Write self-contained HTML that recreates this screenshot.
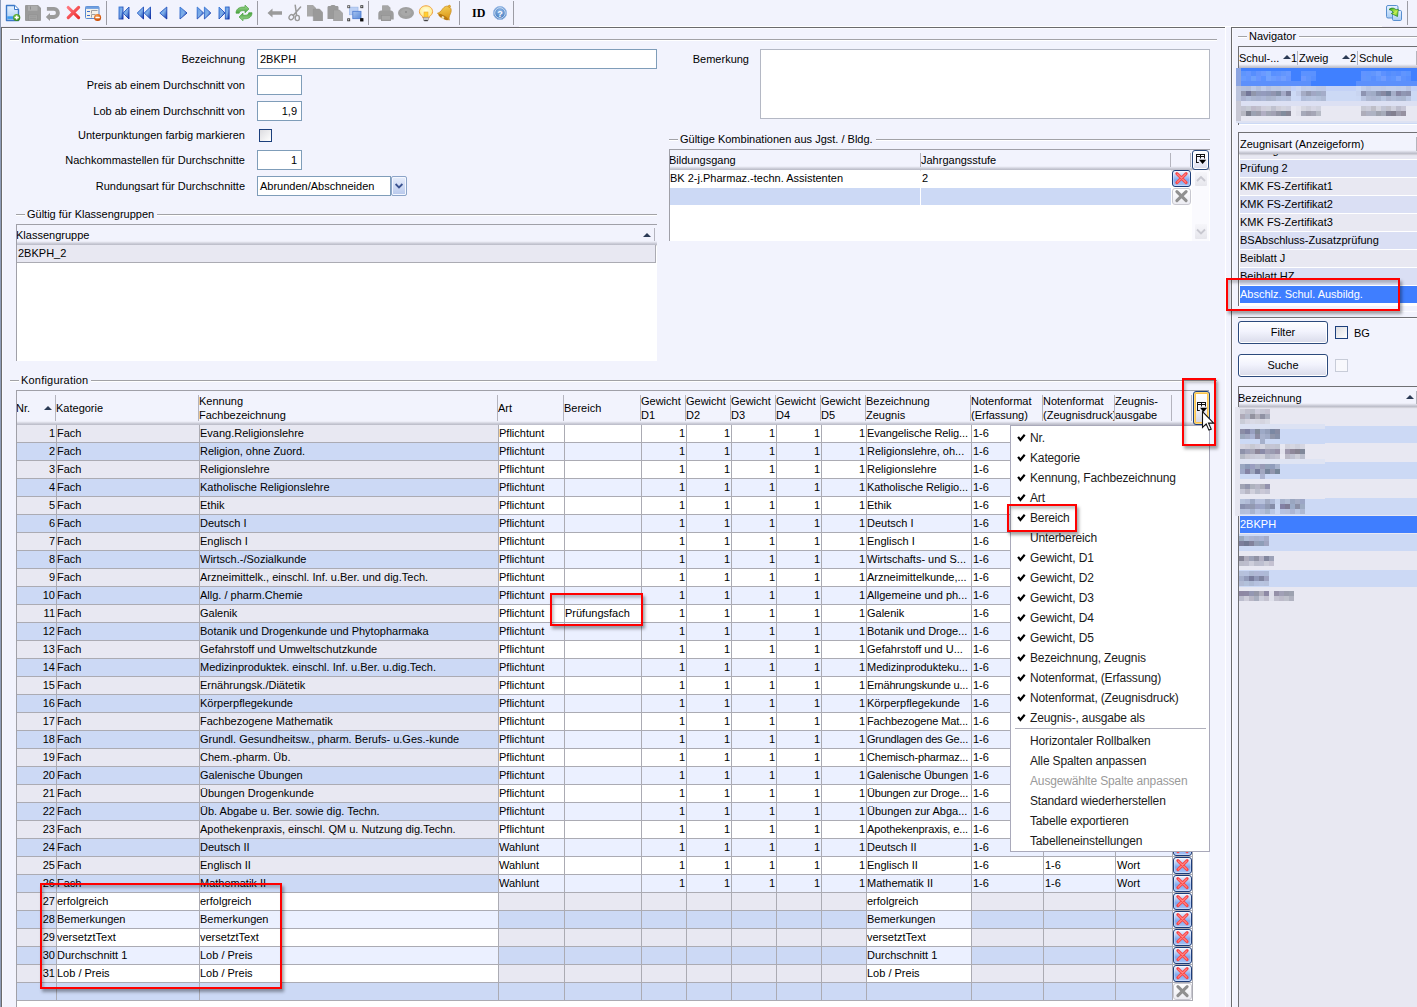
<!DOCTYPE html>
<html lang="de"><head><meta charset="utf-8"><title>Zeugniskonfiguration</title>
<style>
*{box-sizing:border-box;margin:0;padding:0}
html,body{width:1417px;height:1007px;overflow:hidden}
body{background:#F2F3FD;font:11px "Liberation Sans",sans-serif;color:#000;position:relative}
.abs{position:absolute}
.lbl{position:absolute;white-space:nowrap;line-height:14px;height:14px}
.r{text-align:right}
.inp{position:absolute;background:#fff;border:1px solid #7F9DB9;height:20px;line-height:18px;padding:0 2px;white-space:nowrap}
.grp{position:absolute;height:2px;background:linear-gradient(#A2A2A6 50%,#FFFFFF 50%)}
.leg{position:absolute;background:#F2F3FD;padding:0 3px 0 2px;line-height:14px;height:14px;white-space:nowrap}
.tbl{position:absolute;background:#fff;border-top:1px solid #A0A0A8;border-left:1px solid #A0A0A8;overflow:hidden}
.tbl.nt{border-top-color:#707074;border-left-color:#707074}
.hdr{position:absolute;left:0;top:0;right:0;background:linear-gradient(to bottom,#F2F3FD 0,#F2F3FD calc(100% - 4px),#E6E7F1 calc(100% - 3px),#D2D3DE calc(100% - 2px),#B8B9C5 100%);box-shadow:0 1px 1px rgba(0,0,0,.10)}
.hc{position:absolute;top:0;bottom:0;white-space:nowrap;line-height:14px;display:flex;align-items:center;overflow:hidden}
.hc.d{border-right:0}
.hd{position:absolute;top:4px;bottom:4px;width:1px;background:#B4B4BE}
.row{position:absolute;left:0;height:18px;display:flex}
.c{height:18px;line-height:17px;border-right:1px solid #ABABB3;border-bottom:1px solid #ABABB3;white-space:nowrap;overflow:hidden;padding-left:0;flex:none}
.c.n{text-align:right;padding-right:1px;padding-left:0}
.o .ro{background:#E8E8F2}
.e .ro{background:#CCD9F5}
.o .ed{background:#fff}
.e .ed{background:#EBF0FF}
.arr{position:absolute;width:0;height:0;border-left:4.5px solid transparent;border-right:4.5px solid transparent;border-bottom:4.5px solid #2B3A55}
.redbox{position:absolute;border:2px solid #FF0000;box-shadow:2px 3px 3px rgba(0,0,0,.36),inset 2px 3px 3px rgba(0,0,0,.22)}
.btn{position:absolute;border:1px solid #2C4A7C;border-radius:3px;background:linear-gradient(#FFFFFF,#F2F3FD 45%,#D9DBEA);text-align:center;line-height:20px;box-shadow:inset 0 0 0 1px #fff}
.chk{position:absolute;width:13px;height:13px;border:1px solid #1C3F7C;background:linear-gradient(135deg,#DCDCE0,#FFFFFF)}
.delb{position:absolute;width:19px;height:17px;border:1px solid #1C3C78;border-radius:3px;background:linear-gradient(#F4F7FF,#B4CAF4 35%,#7FA8F0 60%,#A8C4F4);box-shadow:inset 0 0 0 1px rgba(255,255,255,.35)}
.delg{position:absolute;width:19px;height:17px;border:1px solid #C8C8D0;border-radius:3px;background:linear-gradient(#FFFFFF,#ECECF2)}
.mi{position:absolute;left:19px;white-space:nowrap;font-size:12px;letter-spacing:-.15px;line-height:20px;height:20px;color:#1a1a1a}
.mc{position:absolute;left:6px;width:9px;height:8px}
.blur{position:absolute;filter:blur(1.6px);opacity:.85}
</style></head>
<body>
<svg width="0" height="0" style="position:absolute"><defs>
<linearGradient id="gb" x1="0" y1="0" x2="1" y2="1"><stop offset="0" stop-color="#5F9BE6"/><stop offset=".5" stop-color="#7FAEE8"/><stop offset="1" stop-color="#0A38B0"/></linearGradient>
<linearGradient id="gbs" x1="0" y1="0" x2="1" y2="1"><stop offset="0" stop-color="#3F7CD8"/><stop offset="1" stop-color="#0828A0"/></linearGradient>
<linearGradient id="gdoc" x1="0" y1="0" x2="0" y2="1"><stop offset="0" stop-color="#E8F2FF"/><stop offset="1" stop-color="#A8CCF4"/></linearGradient>
<radialGradient id="ggr" cx=".4" cy=".35" r=".7"><stop offset="0" stop-color="#7FCB4F"/><stop offset="1" stop-color="#2F7F10"/></radialGradient>
<radialGradient id="gor" cx=".4" cy=".3" r=".7"><stop offset="0" stop-color="#F9A050"/><stop offset="1" stop-color="#C84800"/></radialGradient>
<linearGradient id="ggn" x1="0" y1="0" x2="0" y2="1"><stop offset="0" stop-color="#A4DA98"/><stop offset="1" stop-color="#4AA440"/></linearGradient>
<radialGradient id="ghelp" cx=".5" cy=".35" r=".75"><stop offset="0" stop-color="#8FB8E8"/><stop offset="1" stop-color="#2F68B0"/></radialGradient>
<radialGradient id="gbulb" cx=".5" cy=".4" r=".6"><stop offset="0" stop-color="#FFFFE0"/><stop offset=".7" stop-color="#FFF0A0"/><stop offset="1" stop-color="#F8C870"/></radialGradient>
<linearGradient id="gbell" x1="0" y1="0" x2="1" y2="1"><stop offset="0" stop-color="#F8D860"/><stop offset="1" stop-color="#D89010"/></linearGradient>
<linearGradient id="gsel" x1="0" y1="0" x2="1" y2="1"><stop offset="0" stop-color="#A8C4F0"/><stop offset="1" stop-color="#5888D8"/></linearGradient>
<linearGradient id="gx" x1="0" y1="0" x2="1" y2="1"><stop offset="0" stop-color="#FF7880"/><stop offset="1" stop-color="#EC2C2C"/></linearGradient>
<linearGradient id="ggarr" x1="0" y1="0" x2="1" y2="1"><stop offset="0" stop-color="#20A020"/><stop offset=".6" stop-color="#C8F050"/><stop offset="1" stop-color="#40B020"/></linearGradient>
</defs></svg>
<div class="abs" style="left:1px;top:26px;width:1416px;height:1px;background:#EEEBF8"></div>
<div class="abs" style="left:519px;top:26px;width:863px;height:1px;background:#FFFFFF"></div>
<div class="abs" style="left:1px;top:27px;width:1224px;height:1px;background:#6A6A6C"></div>
<div class="abs" style="left:1231px;top:27px;width:186px;height:1px;background:#6A6A6C"></div>
<svg class="abs" style="left:4px;top:4px" width="18" height="18" viewBox="0 0 18 18"><path d="M2.5 1.5h8l4 4v11h-12z" fill="url(#gdoc)" stroke="#3C78C8" stroke-width="1.4" stroke-linejoin="round"/><path d="M10.5 1.5v4h4" fill="#fff" stroke="#3C78C8" stroke-width="1"/><rect x="3.3" y="12.3" width="7" height="2.6" fill="#3C9CF0"/><circle cx="12.7" cy="13.5" r="3.6" fill="url(#ggr)"/><path d="M12.7 11.4v4.2M10.6 13.5h4.2" stroke="#fff" stroke-width="1.5"/></svg>
<svg class="abs" style="left:25px;top:5px" width="16" height="16" viewBox="0 0 16 16"><path d="M0 1a1 1 0 0 1 1-1h12l3 3v12a1 1 0 0 1-1 1h-14a1 1 0 0 1-1-1z" fill="#9A9A9A"/><rect x="3" y="0.8" width="9.5" height="5" fill="#ADADAD"/><rect x="5" y="1.5" width="1" height="3" fill="#8C8C8C"/><rect x="3.5" y="10" width="9" height="5" fill="#A8A8A8" stroke="#8E8E8E" stroke-width=".6"/><path d="M4.5 11.8h7M4.5 13.4h7" stroke="#909090" stroke-width=".7"/></svg>
<svg class="abs" style="left:45px;top:6px" width="16" height="16" viewBox="0 0 16 16"><path d="M1.900 2.850H9a4.080 4.080 0 0 1 0 8.150H4.500" fill="none" stroke="#9B9B9B" stroke-width="3.900"/><path d="M0.800 11l4.200-4v8z" fill="#9B9B9B"/></svg>
<svg class="abs" style="left:66px;top:5px" width="15" height="15" viewBox="0 0 15 15"><path d="M2.2 2.5l10.4 10.2M12.6 2.3L2.2 12.7" stroke="url(#gx)" stroke-width="3.1" stroke-linecap="round"/></svg>
<svg class="abs" style="left:84px;top:5px" width="18" height="17" viewBox="0 0 18 17"><rect x="1.5" y="1.5" width="13.5" height="12" rx="1" fill="#F4F2EA" stroke="#5A8AD0" stroke-width="1"/><rect x="1.5" y="1.5" width="13.5" height="2.4" fill="#6F9FE0"/><path d="M3 6.5h3M3 10.5h3" stroke="#3C6CD0" stroke-width="1.2"/><path d="M7.5 8.5v-3h6M7.5 12.5v-3h4" stroke="#A0A0A0" stroke-width="1" fill="none"/><circle cx="13.6" cy="12.4" r="3.5" fill="url(#gor)"/><rect x="11.4" y="11.7" width="4.4" height="1.5" rx=".5" fill="#fff"/></svg>
<div class="abs" style="left:106px;top:1px;width:1px;height:24px;background:#9C9CA4"></div>
<svg class="abs" style="left:118px;top:6px" width="14" height="14" viewBox="0 0 14 14"><rect x="1" y="1" width="4" height="12" fill="url(#gb)" stroke="url(#gbs)" stroke-width=".9"/><path d="M5 7l6-6v12z" fill="url(#gb)" stroke="url(#gbs)" stroke-width=".9" stroke-linejoin="round"/></svg>
<svg class="abs" style="left:136px;top:6px" width="16" height="14" viewBox="0 0 16 14"><path d="M1.2 7l6.3-6v12z" fill="url(#gb)" stroke="url(#gbs)" stroke-width=".9" stroke-linejoin="round"/><path d="M8.2 7l6.3-6v12z" fill="url(#gb)" stroke="url(#gbs)" stroke-width=".9" stroke-linejoin="round"/></svg>
<svg class="abs" style="left:158px;top:6px" width="10" height="14" viewBox="0 0 10 14"><path d="M1.8 7l7-6v12z" fill="url(#gb)" stroke="url(#gbs)" stroke-width=".9" stroke-linejoin="round"/></svg>
<svg class="abs" style="left:179px;top:6px" width="10" height="14" viewBox="0 0 10 14"><path d="M8 7l-7-6v12z" fill="url(#gb)" stroke="url(#gbs)" stroke-width=".9" stroke-linejoin="round"/></svg>
<svg class="abs" style="left:196px;top:6px" width="16" height="14" viewBox="0 0 16 14"><path d="M7.6 7l-6.4-6v12z" fill="url(#gb)" stroke="url(#gbs)" stroke-width=".9" stroke-linejoin="round"/><path d="M14.8 7l-6.4-6v12z" fill="url(#gb)" stroke="url(#gbs)" stroke-width=".9" stroke-linejoin="round"/></svg>
<svg class="abs" style="left:218px;top:6px" width="13" height="14" viewBox="0 0 13 14"><path d="M7 7l-6-6v12z" fill="url(#gb)" stroke="url(#gbs)" stroke-width=".9" stroke-linejoin="round"/><rect x="7.3" y="1" width="3.8" height="12" fill="url(#gb)" stroke="url(#gbs)" stroke-width=".9"/></svg>
<svg class="abs" style="left:235px;top:4px" width="18" height="18" viewBox="0 0 18 18"><path d="M1 9.200C1 5.200 4 3.100 8 3.100H10V1.100L14 4.900 10 8.800V6.600H8C6 6.600 4.500 7.600 4.200 9.200z" fill="url(#ggn)" stroke="#4CA040" stroke-width=".7" stroke-linejoin="round"/><path transform="rotate(180 9 8.950)" d="M1 9.200C1 5.200 4 3.100 8 3.100H10V1.100L14 4.900 10 8.800V6.600H8C6 6.600 4.500 7.600 4.200 9.200z" fill="url(#ggn)" stroke="#4CA040" stroke-width=".7" stroke-linejoin="round"/></svg>
<div class="abs" style="left:257px;top:1px;width:1px;height:24px;background:#9C9CA4"></div>
<svg class="abs" style="left:267px;top:8px" width="16" height="10" viewBox="0 0 16 10"><path d="M0.500 5l5-4.500v2.700h9.500v3.600H5.500v2.700z" fill="#9A9A9A"/></svg>
<svg class="abs" style="left:288px;top:4px" width="14" height="18" viewBox="0 0 14 18"><path d="M7.200 1.200l1.300 9.500M12.600 3L5.200 11.500" stroke="#9A9A9A" stroke-width="1.500" fill="none" stroke-linecap="round"/><ellipse cx="3.400" cy="13.200" rx="2.200" ry="2.600" fill="none" stroke="#9A9A9A" stroke-width="1.400" transform="rotate(35 3.400 13.200)"/><ellipse cx="9.300" cy="14" rx="2.100" ry="2.600" fill="none" stroke="#9A9A9A" stroke-width="1.400"/></svg>
<svg class="abs" style="left:307px;top:5px" width="16" height="16" viewBox="0 0 16 16"><path d="M0 0h6l3 3v8.500H0z" fill="#A8A8A8"/><path d="M6.300 4h6.200l3.300 3.500V16H6.300z" fill="#9A9A9A" stroke="#909090" stroke-width=".5"/></svg>
<svg class="abs" style="left:327px;top:5px" width="16" height="16" viewBox="0 0 16 16"><path d="M0.500 2.500c0-1 .6-1.500 1.500-1.500h1.500c.4-.8 1-1 2-1h1c1 0 1.600.2 2 1H10c1 0 1.500.5 1.500 1.500V14H0.500z" fill="#9A9A9A"/><path d="M6.500 5h6l3.300 3.300V16H6.500z" fill="#A6A6A6" stroke="#909090" stroke-width=".5"/></svg>
<svg class="abs" style="left:347px;top:5px" width="17" height="17" viewBox="0 0 17 17"><rect x="2.500" y="2.200" width="8.500" height="7.500" fill="#BCD0F4" stroke="#A0BCEC" stroke-width=".8"/><rect x="5.800" y="6.300" width="8.200" height="7.400" fill="url(#gsel)" stroke="#4878D0" stroke-width=".8"/><rect x=".7" y=".7" width="2" height="2" fill="#fff" stroke="#555" stroke-width=".9"/><rect x="13.800" y=".7" width="2" height="2" fill="#fff" stroke="#333" stroke-width=".9"/><rect x=".7" y="13.800" width="2" height="2" fill="#fff" stroke="#333" stroke-width=".9"/><rect x="13.600" y="13.600" width="2.400" height="2.400" fill="#111" stroke="#111" stroke-width=".9"/></svg>
<div class="abs" style="left:368px;top:1px;width:1px;height:24px;background:#9C9CA4"></div>
<svg class="abs" style="left:378px;top:5px" width="16" height="16" viewBox="0 0 16 16"><path d="M4 6V1.200c0-.6.400-1 1-1h5l2.500 2.500V6z" fill="#A6A6A6"/><path d="M0.300 9c0-2 1.200-3.500 3-3.500h9.400c1.800 0 3 1.500 3 3.500v5.500h-2.700V16H3v-1.500H0.300z" fill="#9C9C9C"/><rect x="3.600" y="10.500" width="8.800" height="4.600" fill="#A8A8A8" stroke="#8E8E8E" stroke-width=".5"/></svg>
<svg class="abs" style="left:398px;top:7px" width="16" height="12" viewBox="0 0 16 12"><ellipse cx="8" cy="6" rx="8" ry="6" fill="#A0A0A0"/><ellipse cx="8" cy="5.500" rx="5.500" ry="3.500" fill="#A8A8A8"/><circle cx="8" cy="5" r="1" fill="#888"/></svg>
<svg class="abs" style="left:418px;top:5px" width="16" height="17" viewBox="0 0 16 17"><path d="M8 .8c3.800 0 6.600 2.600 6.600 5.800 0 2.400-1.600 3.800-3.400 5.200v1.200H4.800v-1.200C3 10.400 1.400 9 1.400 6.600 1.400 3.400 4.200.8 8 .8z" fill="url(#gbulb)" stroke="#F0A040" stroke-width="1"/><rect x="6" y="7" width="4" height="5" fill="#FFD030" stroke="#F0A830" stroke-width=".6"/><rect x="5.600" y="12.600" width="4.800" height="2.600" fill="#C8C8C8" stroke="#888" stroke-width=".5"/><rect x="6.200" y="15" width="3.600" height="1.200" fill="#444"/></svg>
<svg class="abs" style="left:437px;top:4px" width="17" height="18" viewBox="0 0 17 18"><g transform="rotate(30 8.500 9)"><path d="M8.500 1.800c2.800 0 4.300 2.200 4.600 5.500.2 2.800.8 4.400 2.200 6H1.700c1.400-1.600 2-3.200 2.200-6 .3-3.300 1.800-5.500 4.600-5.500z" fill="url(#gbell)" stroke="#C88818" stroke-width=".7"/><circle cx="8.500" cy="1.300" r="1.200" fill="#E8B030" stroke="#C88818" stroke-width=".5"/><ellipse cx="8.500" cy="13.600" rx="5.500" ry="1.700" fill="#B87810"/><circle cx="8.500" cy="14.300" r="1.400" fill="#F0E0B0"/></g></svg>
<div class="abs" style="left:459px;top:1px;width:1px;height:24px;background:#9C9CA4"></div>
<div class="abs" style="left:472px;top:6px;font:bold 12px 'Liberation Serif',serif;line-height:14px;color:#000">ID</div>
<svg class="abs" style="left:492px;top:5px" width="16" height="16" viewBox="0 0 16 16"><circle cx="8" cy="8" r="6.600" fill="url(#ghelp)" stroke="#9CBCE8" stroke-width="1"/><circle cx="8" cy="8" r="5.300" fill="none" stroke="#E8F0FC" stroke-width=".8"/><text x="8" y="11.500" font-family="Liberation Sans,sans-serif" font-weight="bold" font-size="9" fill="#fff" text-anchor="middle">?</text></svg>
<div class="abs" style="left:513px;top:1px;width:1px;height:24px;background:#9C9CA4"></div>
<svg class="abs" style="left:1385px;top:4px" width="18" height="18" viewBox="0 0 18 18"><rect x="1.500" y="1.500" width="11.500" height="12.500" rx="1.500" fill="url(#gdoc)" stroke="#5A90D0" stroke-width="1"/><rect x="7.500" y="6.500" width="9" height="10" rx="1.200" fill="url(#gdoc)" stroke="#5A90D0" stroke-width="1"/><path d="M4 5.500c2-1.800 5-2 7 .3l2.300-.6-.8 7.300-6.300-3 2.200-.8C7.500 6.800 6 6.200 4 5.500z" fill="url(#ggarr)" stroke="#208020" stroke-width=".7" stroke-linejoin="round"/></svg>
<div class="abs" style="left:1407px;top:1px;width:1px;height:24px;background:#9C9CA4"></div>
<div class="abs" style="left:0;top:0;width:1px;height:1007px;background:#8E9CB8"></div>
<div class="abs" style="left:1px;top:27px;width:1px;height:980px;background:#6A6A6C"></div>
<div class="abs" style="left:2px;top:28px;width:1px;height:979px;background:#FAFAFF"></div>
<div class="abs" style="left:2px;top:28px;width:1223px;height:1px;background:#FAFAFF"></div>
<div class="abs" style="left:1225px;top:27px;width:1px;height:980px;background:#fff"></div>
<div class="grp" style="left:10px;top:39px;width:1207px"></div><div class="leg" style="left:19px;top:32px"><span style="letter-spacing:.27px">Information</span></div>
<div class="lbl r" style="left:-55px;width:300px;top:52px">Bezeichnung</div>
<div class="inp" style="left:257px;top:49px;width:400px">2BKPH</div>
<div class="lbl r" style="left:-55px;width:300px;top:78px">Preis ab einem Durchschnitt von</div>
<div class="inp" style="left:257px;top:75px;width:45px"></div>
<div class="lbl r" style="left:-55px;width:300px;top:104px">Lob ab einem Durchschnitt von</div>
<div class="inp r" style="left:257px;top:101px;width:45px;padding-right:4px">1,9</div>
<div class="lbl r" style="left:-55px;width:300px;top:128px">Unterpunktungen farbig markieren</div>
<div class="chk" style="left:259px;top:129px"></div>
<div class="lbl r" style="left:-55px;width:300px;top:153px">Nachkommastellen für Durchschnitte</div>
<div class="inp r" style="left:257px;top:150px;width:45px;padding-right:4px">1</div>
<div class="lbl r" style="left:-55px;width:300px;top:179px">Rundungsart für Durchschnitte</div>
<div class="inp" style="left:257px;top:176px;width:134px">Abrunden/Abschneiden</div>
<div class="abs" style="left:391px;top:176px;width:16px;height:20px;border:1px solid #8CA4C8;border-radius:2px;background:linear-gradient(#E8EEFC,#B8C8EC);box-shadow:inset 0 0 0 1px #F4F7FF"><svg width="10" height="8" viewBox="0 0 10 8" style="position:absolute;left:2px;top:5px"><path d="M1.600 2l3.400 3.400 3.400-3.400" fill="none" stroke="#3A5290" stroke-width="1.800"/></svg></div>
<div class="lbl r" style="left:449px;width:300px;top:52px">Bemerkung</div>
<div class="abs" style="left:760px;top:49px;width:450px;height:70px;background:#fff;border:1px solid #B4B8C4"></div>
<div class="grp" style="left:16px;top:214px;width:641px"></div><div class="leg" style="left:25px;top:207px">Gültig für Klassengruppen</div>
<div class="tbl" style="left:16px;top:224px;width:641px;height:137px"><div class="hdr" style="height:20px"><div class="hc" style="left:-1px;width:300px">Klassengruppe</div><div class="arr" style="left:626px;top:8px"></div><div class="hd" style="left:637px;top:3px;bottom:4px"></div></div><div class="abs" style="left:0;top:20px;width:639px;height:18px;background:#E8E8F2;border-bottom:1px solid #ABABB3;border-right:1px solid #ABABB3;line-height:17px;padding-left:1px">2BKPH_2</div></div>
<div class="grp" style="left:669px;top:139px;width:541px"></div><div class="leg" style="left:678px;top:132px">Gültige Kombinationen aus Jgst. / Bldg.</div>
<div class="tbl" style="left:669px;top:149px;width:541px;height:92px"><div class="hdr" style="height:20px"><div class="hc" style="left:-1px;width:240px">Bildungsgang</div><div class="hd" style="left:250px;top:3px;bottom:3px"></div><div class="hc" style="left:251px;width:200px">Jahrgangsstufe</div><div class="hd" style="left:500px;top:3px;bottom:3px"></div><div class="hd" style="left:520px;top:3px;bottom:3px"></div></div><div class="abs" style="left:0;top:20px;width:250px;height:18px;line-height:17px;padding-left:0;background:#fff">BK 2-j.Pharmaz.-techn. Assistenten</div><div class="abs" style="left:251px;top:20px;width:250px;height:18px;line-height:17px;padding-left:1px;background:#fff">2</div><div class="abs" style="left:0;top:38px;width:250px;height:17px;background:#CCD9F5"></div><div class="abs" style="left:251px;top:38px;width:250px;height:17px;background:#CCD9F5"></div><div class="delb" style="left:502px;top:20px;height:17px"><svg width="17" height="15" viewBox="0 0 17 15" style="position:absolute;left:0;top:0"><path d="M3.900 2.700l9.200 9M13.100 2.700L3.900 11.700" stroke="#FA4848" stroke-width="3.100" stroke-linecap="round"/><path d="M4.400 3.200l8.200 8M12.600 3.200L4.400 11.200" stroke="#FF8888" stroke-width="1.100" stroke-linecap="round"/></svg></div><div class="delg" style="left:502px;top:38px;height:17px"><svg width="17" height="15" viewBox="0 0 17 15" style="position:absolute;left:0;top:0"><path d="M3.900 2.700l9.200 9M13.100 2.700L3.900 11.700" stroke="#909090" stroke-width="3.100" stroke-linecap="round"/></svg></div><div class="abs" style="left:522px;top:20px;width:17px;height:71px;background:#FAFAFE"></div><div class="abs" style="left:525px;top:22px;width:12px;height:14px;background:linear-gradient(#F6F6FA,#E6E6EC);border-radius:1px"><svg width="12" height="14" style="position:absolute"><path d="M2 9l4-4 4 4" fill="none" stroke="#C8C8D0" stroke-width="1.800"/></svg></div><div class="abs" style="left:525px;top:74px;width:12px;height:15px;background:linear-gradient(#F6F6FA,#E6E6EC);border-radius:1px"><svg width="12" height="15" style="position:absolute"><path d="M2 5.500l4 4 4-4" fill="none" stroke="#C8C8D0" stroke-width="1.800"/></svg></div></div>
<div class="abs" style="left:1192px;top:150px;width:17px;height:20px;border:1px solid #2C4A7C;border-radius:3px;background:linear-gradient(#FFFFFF,#F2F3FD 50%,#D9DBEA);box-shadow:inset 0 0 0 1px #fff"><svg width="11" height="11" viewBox="0 0 11 11" style="position:absolute;left:3px;top:3px"><path d="M0 .5h9M0 2.500h9M.5 0v8.500M4.500 0v4.500M8.500 0v4.500M0 8.500h2.800" fill="none" stroke="#111" stroke-width="1"/><path d="M3 5.800h7.200l-3.600 4.300z" fill="#000"/></svg></div>
<div class="grp" style="left:10px;top:380px;width:1207px"></div><div class="leg" style="left:19px;top:373px"><span style="letter-spacing:.2px">Konfiguration</span></div>
<div class="tbl" style="left:16px;top:390px;width:1193px;height:617px">
<div class="hdr" style="height:34px">
<div class="hc" style="left:-1px;width:39px;"><span>Nr.</span></div>
<div class="hd" style="left:38px"></div>
<div class="hc" style="left:39px;width:142px;"><span>Kategorie</span></div>
<div class="hd" style="left:181px"></div>
<div class="hc" style="left:182px;width:298px;"><span>Kennung<br>Fachbezeichnung</span></div>
<div class="hd" style="left:480px"></div>
<div class="hc" style="left:481px;width:65px;"><span>Art</span></div>
<div class="hd" style="left:546px"></div>
<div class="hc" style="left:547px;width:76px;"><span>Bereich</span></div>
<div class="hd" style="left:623px"></div>
<div class="hc" style="left:624px;width:44px;"><span>Gewicht<br>D1</span></div>
<div class="hd" style="left:668px"></div>
<div class="hc" style="left:669px;width:44px;"><span>Gewicht<br>D2</span></div>
<div class="hd" style="left:713px"></div>
<div class="hc" style="left:714px;width:44px;"><span>Gewicht<br>D3</span></div>
<div class="hd" style="left:758px"></div>
<div class="hc" style="left:759px;width:44px;"><span>Gewicht<br>D4</span></div>
<div class="hd" style="left:803px"></div>
<div class="hc" style="left:804px;width:44px;"><span>Gewicht<br>D5</span></div>
<div class="hd" style="left:848px"></div>
<div class="hc" style="left:849px;width:104px;"><span>Bezeichnung<br>Zeugnis</span></div>
<div class="hd" style="left:953px"></div>
<div class="hc" style="left:954px;width:71px;"><span>Notenformat<br>(Erfassung)</span></div>
<div class="hd" style="left:1025px"></div>
<div class="hc" style="left:1026px;width:71px;"><span>Notenformat<br>(Zeugnisdruck)</span></div>
<div class="hd" style="left:1097px"></div>
<div class="hc" style="left:1098px;width:56px;"><span>Zeugnis-<br>ausgabe</span></div>
<div class="hd" style="left:1154px"></div>
<div class="hd" style="left:1174px"></div>
<div class="arr" style="left:27px;top:15px"></div>
</div>
<div class="row o" style="top:34px"><div class="c ro n" style="width:40px">1</div><div class="c ro" style="width:143px">Fach</div><div class="c ro" style="width:299px">Evang.Religionslehre</div><div class="c ed" style="width:66px">Pflichtunt</div><div class="c ed" style="width:77px"></div><div class="c ed n" style="width:45px">1</div><div class="c ed n" style="width:45px">1</div><div class="c ed n" style="width:45px">1</div><div class="c ed n" style="width:45px">1</div><div class="c ed n" style="width:45px">1</div><div class="c ed" style="width:105px"><span style="letter-spacing:-0.08px">Evangelische Relig...</span></div><div class="c ed" style="width:72px;padding-left:1px">1-6</div><div class="c ed" style="width:72px;padding-left:1px">1-6</div><div class="c ed" style="width:57px;padding-left:1px">Wort</div><div class="c" style="width:20px;background:#fff"></div></div>
<div class="delb" style="left:1156px;top:34px"><svg width="17" height="15" viewBox="0 0 17 15" style="position:absolute;left:0;top:0"><path d="M3.900 2.700l9.200 9M13.100 2.700L3.900 11.700" stroke="#FA4848" stroke-width="3.100" stroke-linecap="round"/><path d="M4.400 3.200l8.200 8M12.600 3.200L4.400 11.200" stroke="#FF8888" stroke-width="1.100" stroke-linecap="round"/></svg></div>
<div class="row e" style="top:52px"><div class="c ro n" style="width:40px">2</div><div class="c ro" style="width:143px">Fach</div><div class="c ro" style="width:299px">Religion, ohne Zuord.</div><div class="c ed" style="width:66px">Pflichtunt</div><div class="c ed" style="width:77px"></div><div class="c ed n" style="width:45px">1</div><div class="c ed n" style="width:45px">1</div><div class="c ed n" style="width:45px">1</div><div class="c ed n" style="width:45px">1</div><div class="c ed n" style="width:45px">1</div><div class="c ed" style="width:105px">Religionslehre, oh...</div><div class="c ed" style="width:72px;padding-left:1px">1-6</div><div class="c ed" style="width:72px;padding-left:1px">1-6</div><div class="c ed" style="width:57px;padding-left:1px">Wort</div><div class="c" style="width:20px;background:#fff"></div></div>
<div class="delb" style="left:1156px;top:52px"><svg width="17" height="15" viewBox="0 0 17 15" style="position:absolute;left:0;top:0"><path d="M3.900 2.700l9.200 9M13.100 2.700L3.900 11.700" stroke="#FA4848" stroke-width="3.100" stroke-linecap="round"/><path d="M4.400 3.200l8.200 8M12.600 3.200L4.400 11.200" stroke="#FF8888" stroke-width="1.100" stroke-linecap="round"/></svg></div>
<div class="row o" style="top:70px"><div class="c ro n" style="width:40px">3</div><div class="c ro" style="width:143px">Fach</div><div class="c ro" style="width:299px">Religionslehre</div><div class="c ed" style="width:66px">Pflichtunt</div><div class="c ed" style="width:77px"></div><div class="c ed n" style="width:45px">1</div><div class="c ed n" style="width:45px">1</div><div class="c ed n" style="width:45px">1</div><div class="c ed n" style="width:45px">1</div><div class="c ed n" style="width:45px">1</div><div class="c ed" style="width:105px">Religionslehre</div><div class="c ed" style="width:72px;padding-left:1px">1-6</div><div class="c ed" style="width:72px;padding-left:1px">1-6</div><div class="c ed" style="width:57px;padding-left:1px">Wort</div><div class="c" style="width:20px;background:#fff"></div></div>
<div class="delb" style="left:1156px;top:70px"><svg width="17" height="15" viewBox="0 0 17 15" style="position:absolute;left:0;top:0"><path d="M3.900 2.700l9.200 9M13.100 2.700L3.900 11.700" stroke="#FA4848" stroke-width="3.100" stroke-linecap="round"/><path d="M4.400 3.200l8.200 8M12.600 3.200L4.400 11.200" stroke="#FF8888" stroke-width="1.100" stroke-linecap="round"/></svg></div>
<div class="row e" style="top:88px"><div class="c ro n" style="width:40px">4</div><div class="c ro" style="width:143px">Fach</div><div class="c ro" style="width:299px">Katholische Religionslehre</div><div class="c ed" style="width:66px">Pflichtunt</div><div class="c ed" style="width:77px"></div><div class="c ed n" style="width:45px">1</div><div class="c ed n" style="width:45px">1</div><div class="c ed n" style="width:45px">1</div><div class="c ed n" style="width:45px">1</div><div class="c ed n" style="width:45px">1</div><div class="c ed" style="width:105px"><span style="letter-spacing:-0.08px">Katholische Religio...</span></div><div class="c ed" style="width:72px;padding-left:1px">1-6</div><div class="c ed" style="width:72px;padding-left:1px">1-6</div><div class="c ed" style="width:57px;padding-left:1px">Wort</div><div class="c" style="width:20px;background:#fff"></div></div>
<div class="delb" style="left:1156px;top:88px"><svg width="17" height="15" viewBox="0 0 17 15" style="position:absolute;left:0;top:0"><path d="M3.900 2.700l9.200 9M13.100 2.700L3.900 11.700" stroke="#FA4848" stroke-width="3.100" stroke-linecap="round"/><path d="M4.400 3.200l8.200 8M12.600 3.200L4.400 11.200" stroke="#FF8888" stroke-width="1.100" stroke-linecap="round"/></svg></div>
<div class="row o" style="top:106px"><div class="c ro n" style="width:40px">5</div><div class="c ro" style="width:143px">Fach</div><div class="c ro" style="width:299px">Ethik</div><div class="c ed" style="width:66px">Pflichtunt</div><div class="c ed" style="width:77px"></div><div class="c ed n" style="width:45px">1</div><div class="c ed n" style="width:45px">1</div><div class="c ed n" style="width:45px">1</div><div class="c ed n" style="width:45px">1</div><div class="c ed n" style="width:45px">1</div><div class="c ed" style="width:105px">Ethik</div><div class="c ed" style="width:72px;padding-left:1px">1-6</div><div class="c ed" style="width:72px;padding-left:1px">1-6</div><div class="c ed" style="width:57px;padding-left:1px">Wort</div><div class="c" style="width:20px;background:#fff"></div></div>
<div class="delb" style="left:1156px;top:106px"><svg width="17" height="15" viewBox="0 0 17 15" style="position:absolute;left:0;top:0"><path d="M3.900 2.700l9.200 9M13.100 2.700L3.900 11.700" stroke="#FA4848" stroke-width="3.100" stroke-linecap="round"/><path d="M4.400 3.200l8.200 8M12.600 3.200L4.400 11.200" stroke="#FF8888" stroke-width="1.100" stroke-linecap="round"/></svg></div>
<div class="row e" style="top:124px"><div class="c ro n" style="width:40px">6</div><div class="c ro" style="width:143px">Fach</div><div class="c ro" style="width:299px">Deutsch I</div><div class="c ed" style="width:66px">Pflichtunt</div><div class="c ed" style="width:77px"></div><div class="c ed n" style="width:45px">1</div><div class="c ed n" style="width:45px">1</div><div class="c ed n" style="width:45px">1</div><div class="c ed n" style="width:45px">1</div><div class="c ed n" style="width:45px">1</div><div class="c ed" style="width:105px">Deutsch I</div><div class="c ed" style="width:72px;padding-left:1px">1-6</div><div class="c ed" style="width:72px;padding-left:1px">1-6</div><div class="c ed" style="width:57px;padding-left:1px">Wort</div><div class="c" style="width:20px;background:#fff"></div></div>
<div class="delb" style="left:1156px;top:124px"><svg width="17" height="15" viewBox="0 0 17 15" style="position:absolute;left:0;top:0"><path d="M3.900 2.700l9.200 9M13.100 2.700L3.900 11.700" stroke="#FA4848" stroke-width="3.100" stroke-linecap="round"/><path d="M4.400 3.200l8.200 8M12.600 3.200L4.400 11.200" stroke="#FF8888" stroke-width="1.100" stroke-linecap="round"/></svg></div>
<div class="row o" style="top:142px"><div class="c ro n" style="width:40px">7</div><div class="c ro" style="width:143px">Fach</div><div class="c ro" style="width:299px">Englisch I</div><div class="c ed" style="width:66px">Pflichtunt</div><div class="c ed" style="width:77px"></div><div class="c ed n" style="width:45px">1</div><div class="c ed n" style="width:45px">1</div><div class="c ed n" style="width:45px">1</div><div class="c ed n" style="width:45px">1</div><div class="c ed n" style="width:45px">1</div><div class="c ed" style="width:105px">Englisch I</div><div class="c ed" style="width:72px;padding-left:1px">1-6</div><div class="c ed" style="width:72px;padding-left:1px">1-6</div><div class="c ed" style="width:57px;padding-left:1px">Wort</div><div class="c" style="width:20px;background:#fff"></div></div>
<div class="delb" style="left:1156px;top:142px"><svg width="17" height="15" viewBox="0 0 17 15" style="position:absolute;left:0;top:0"><path d="M3.900 2.700l9.200 9M13.100 2.700L3.900 11.700" stroke="#FA4848" stroke-width="3.100" stroke-linecap="round"/><path d="M4.400 3.200l8.200 8M12.600 3.200L4.400 11.200" stroke="#FF8888" stroke-width="1.100" stroke-linecap="round"/></svg></div>
<div class="row e" style="top:160px"><div class="c ro n" style="width:40px">8</div><div class="c ro" style="width:143px">Fach</div><div class="c ro" style="width:299px">Wirtsch.-/Sozialkunde</div><div class="c ed" style="width:66px">Pflichtunt</div><div class="c ed" style="width:77px"></div><div class="c ed n" style="width:45px">1</div><div class="c ed n" style="width:45px">1</div><div class="c ed n" style="width:45px">1</div><div class="c ed n" style="width:45px">1</div><div class="c ed n" style="width:45px">1</div><div class="c ed" style="width:105px">Wirtschafts- und S...</div><div class="c ed" style="width:72px;padding-left:1px">1-6</div><div class="c ed" style="width:72px;padding-left:1px">1-6</div><div class="c ed" style="width:57px;padding-left:1px">Wort</div><div class="c" style="width:20px;background:#fff"></div></div>
<div class="delb" style="left:1156px;top:160px"><svg width="17" height="15" viewBox="0 0 17 15" style="position:absolute;left:0;top:0"><path d="M3.900 2.700l9.200 9M13.100 2.700L3.900 11.700" stroke="#FA4848" stroke-width="3.100" stroke-linecap="round"/><path d="M4.400 3.200l8.200 8M12.600 3.200L4.400 11.200" stroke="#FF8888" stroke-width="1.100" stroke-linecap="round"/></svg></div>
<div class="row o" style="top:178px"><div class="c ro n" style="width:40px">9</div><div class="c ro" style="width:143px">Fach</div><div class="c ro" style="width:299px">Arzneimittelk., einschl. Inf. u.Ber. und dig.Tech.</div><div class="c ed" style="width:66px">Pflichtunt</div><div class="c ed" style="width:77px"></div><div class="c ed n" style="width:45px">1</div><div class="c ed n" style="width:45px">1</div><div class="c ed n" style="width:45px">1</div><div class="c ed n" style="width:45px">1</div><div class="c ed n" style="width:45px">1</div><div class="c ed" style="width:105px">Arzneimittelkunde,...</div><div class="c ed" style="width:72px;padding-left:1px">1-6</div><div class="c ed" style="width:72px;padding-left:1px">1-6</div><div class="c ed" style="width:57px;padding-left:1px">Wort</div><div class="c" style="width:20px;background:#fff"></div></div>
<div class="delb" style="left:1156px;top:178px"><svg width="17" height="15" viewBox="0 0 17 15" style="position:absolute;left:0;top:0"><path d="M3.900 2.700l9.200 9M13.100 2.700L3.900 11.700" stroke="#FA4848" stroke-width="3.100" stroke-linecap="round"/><path d="M4.400 3.200l8.200 8M12.600 3.200L4.400 11.200" stroke="#FF8888" stroke-width="1.100" stroke-linecap="round"/></svg></div>
<div class="row e" style="top:196px"><div class="c ro n" style="width:40px">10</div><div class="c ro" style="width:143px">Fach</div><div class="c ro" style="width:299px">Allg. / pharm.Chemie</div><div class="c ed" style="width:66px">Pflichtunt</div><div class="c ed" style="width:77px"></div><div class="c ed n" style="width:45px">1</div><div class="c ed n" style="width:45px">1</div><div class="c ed n" style="width:45px">1</div><div class="c ed n" style="width:45px">1</div><div class="c ed n" style="width:45px">1</div><div class="c ed" style="width:105px">Allgemeine und ph...</div><div class="c ed" style="width:72px;padding-left:1px">1-6</div><div class="c ed" style="width:72px;padding-left:1px">1-6</div><div class="c ed" style="width:57px;padding-left:1px">Wort</div><div class="c" style="width:20px;background:#fff"></div></div>
<div class="delb" style="left:1156px;top:196px"><svg width="17" height="15" viewBox="0 0 17 15" style="position:absolute;left:0;top:0"><path d="M3.900 2.700l9.200 9M13.100 2.700L3.900 11.700" stroke="#FA4848" stroke-width="3.100" stroke-linecap="round"/><path d="M4.400 3.200l8.200 8M12.600 3.200L4.400 11.200" stroke="#FF8888" stroke-width="1.100" stroke-linecap="round"/></svg></div>
<div class="row o" style="top:214px"><div class="c ro n" style="width:40px">11</div><div class="c ro" style="width:143px">Fach</div><div class="c ro" style="width:299px">Galenik</div><div class="c ed" style="width:66px">Pflichtunt</div><div class="c ed" style="width:77px">Prüfungsfach</div><div class="c ed n" style="width:45px">1</div><div class="c ed n" style="width:45px">1</div><div class="c ed n" style="width:45px">1</div><div class="c ed n" style="width:45px">1</div><div class="c ed n" style="width:45px">1</div><div class="c ed" style="width:105px">Galenik</div><div class="c ed" style="width:72px;padding-left:1px">1-6</div><div class="c ed" style="width:72px;padding-left:1px">1-6</div><div class="c ed" style="width:57px;padding-left:1px">Wort</div><div class="c" style="width:20px;background:#fff"></div></div>
<div class="delb" style="left:1156px;top:214px"><svg width="17" height="15" viewBox="0 0 17 15" style="position:absolute;left:0;top:0"><path d="M3.900 2.700l9.200 9M13.100 2.700L3.900 11.700" stroke="#FA4848" stroke-width="3.100" stroke-linecap="round"/><path d="M4.400 3.200l8.200 8M12.600 3.200L4.400 11.200" stroke="#FF8888" stroke-width="1.100" stroke-linecap="round"/></svg></div>
<div class="row e" style="top:232px"><div class="c ro n" style="width:40px">12</div><div class="c ro" style="width:143px">Fach</div><div class="c ro" style="width:299px">Botanik und Drogenkunde und Phytopharmaka</div><div class="c ed" style="width:66px">Pflichtunt</div><div class="c ed" style="width:77px"></div><div class="c ed n" style="width:45px">1</div><div class="c ed n" style="width:45px">1</div><div class="c ed n" style="width:45px">1</div><div class="c ed n" style="width:45px">1</div><div class="c ed n" style="width:45px">1</div><div class="c ed" style="width:105px">Botanik und Droge...</div><div class="c ed" style="width:72px;padding-left:1px">1-6</div><div class="c ed" style="width:72px;padding-left:1px">1-6</div><div class="c ed" style="width:57px;padding-left:1px">Wort</div><div class="c" style="width:20px;background:#fff"></div></div>
<div class="delb" style="left:1156px;top:232px"><svg width="17" height="15" viewBox="0 0 17 15" style="position:absolute;left:0;top:0"><path d="M3.900 2.700l9.200 9M13.100 2.700L3.900 11.700" stroke="#FA4848" stroke-width="3.100" stroke-linecap="round"/><path d="M4.400 3.200l8.200 8M12.600 3.200L4.400 11.200" stroke="#FF8888" stroke-width="1.100" stroke-linecap="round"/></svg></div>
<div class="row o" style="top:250px"><div class="c ro n" style="width:40px">13</div><div class="c ro" style="width:143px">Fach</div><div class="c ro" style="width:299px">Gefahrstoff und Umweltschutzkunde</div><div class="c ed" style="width:66px">Pflichtunt</div><div class="c ed" style="width:77px"></div><div class="c ed n" style="width:45px">1</div><div class="c ed n" style="width:45px">1</div><div class="c ed n" style="width:45px">1</div><div class="c ed n" style="width:45px">1</div><div class="c ed n" style="width:45px">1</div><div class="c ed" style="width:105px">Gefahrstoff und U...</div><div class="c ed" style="width:72px;padding-left:1px">1-6</div><div class="c ed" style="width:72px;padding-left:1px">1-6</div><div class="c ed" style="width:57px;padding-left:1px">Wort</div><div class="c" style="width:20px;background:#fff"></div></div>
<div class="delb" style="left:1156px;top:250px"><svg width="17" height="15" viewBox="0 0 17 15" style="position:absolute;left:0;top:0"><path d="M3.900 2.700l9.200 9M13.100 2.700L3.900 11.700" stroke="#FA4848" stroke-width="3.100" stroke-linecap="round"/><path d="M4.400 3.200l8.200 8M12.600 3.200L4.400 11.200" stroke="#FF8888" stroke-width="1.100" stroke-linecap="round"/></svg></div>
<div class="row e" style="top:268px"><div class="c ro n" style="width:40px">14</div><div class="c ro" style="width:143px">Fach</div><div class="c ro" style="width:299px">Medizinproduktek. einschl. Inf. u.Ber. u.dig.Tech.</div><div class="c ed" style="width:66px">Pflichtunt</div><div class="c ed" style="width:77px"></div><div class="c ed n" style="width:45px">1</div><div class="c ed n" style="width:45px">1</div><div class="c ed n" style="width:45px">1</div><div class="c ed n" style="width:45px">1</div><div class="c ed n" style="width:45px">1</div><div class="c ed" style="width:105px"><span style="letter-spacing:-0.03px">Medizinprodukteku...</span></div><div class="c ed" style="width:72px;padding-left:1px">1-6</div><div class="c ed" style="width:72px;padding-left:1px">1-6</div><div class="c ed" style="width:57px;padding-left:1px">Wort</div><div class="c" style="width:20px;background:#fff"></div></div>
<div class="delb" style="left:1156px;top:268px"><svg width="17" height="15" viewBox="0 0 17 15" style="position:absolute;left:0;top:0"><path d="M3.900 2.700l9.200 9M13.100 2.700L3.900 11.700" stroke="#FA4848" stroke-width="3.100" stroke-linecap="round"/><path d="M4.400 3.200l8.200 8M12.600 3.200L4.400 11.200" stroke="#FF8888" stroke-width="1.100" stroke-linecap="round"/></svg></div>
<div class="row o" style="top:286px"><div class="c ro n" style="width:40px">15</div><div class="c ro" style="width:143px">Fach</div><div class="c ro" style="width:299px">Ernährungsk./Diätetik</div><div class="c ed" style="width:66px">Pflichtunt</div><div class="c ed" style="width:77px"></div><div class="c ed n" style="width:45px">1</div><div class="c ed n" style="width:45px">1</div><div class="c ed n" style="width:45px">1</div><div class="c ed n" style="width:45px">1</div><div class="c ed n" style="width:45px">1</div><div class="c ed" style="width:105px"><span style="letter-spacing:-0.21px">Ernährungskunde u...</span></div><div class="c ed" style="width:72px;padding-left:1px">1-6</div><div class="c ed" style="width:72px;padding-left:1px">1-6</div><div class="c ed" style="width:57px;padding-left:1px">Wort</div><div class="c" style="width:20px;background:#fff"></div></div>
<div class="delb" style="left:1156px;top:286px"><svg width="17" height="15" viewBox="0 0 17 15" style="position:absolute;left:0;top:0"><path d="M3.900 2.700l9.200 9M13.100 2.700L3.900 11.700" stroke="#FA4848" stroke-width="3.100" stroke-linecap="round"/><path d="M4.400 3.200l8.200 8M12.600 3.200L4.400 11.200" stroke="#FF8888" stroke-width="1.100" stroke-linecap="round"/></svg></div>
<div class="row e" style="top:304px"><div class="c ro n" style="width:40px">16</div><div class="c ro" style="width:143px">Fach</div><div class="c ro" style="width:299px">Körperpflegekunde</div><div class="c ed" style="width:66px">Pflichtunt</div><div class="c ed" style="width:77px"></div><div class="c ed n" style="width:45px">1</div><div class="c ed n" style="width:45px">1</div><div class="c ed n" style="width:45px">1</div><div class="c ed n" style="width:45px">1</div><div class="c ed n" style="width:45px">1</div><div class="c ed" style="width:105px">Körperpflegekunde</div><div class="c ed" style="width:72px;padding-left:1px">1-6</div><div class="c ed" style="width:72px;padding-left:1px">1-6</div><div class="c ed" style="width:57px;padding-left:1px">Wort</div><div class="c" style="width:20px;background:#fff"></div></div>
<div class="delb" style="left:1156px;top:304px"><svg width="17" height="15" viewBox="0 0 17 15" style="position:absolute;left:0;top:0"><path d="M3.900 2.700l9.200 9M13.100 2.700L3.900 11.700" stroke="#FA4848" stroke-width="3.100" stroke-linecap="round"/><path d="M4.400 3.200l8.200 8M12.600 3.200L4.400 11.200" stroke="#FF8888" stroke-width="1.100" stroke-linecap="round"/></svg></div>
<div class="row o" style="top:322px"><div class="c ro n" style="width:40px">17</div><div class="c ro" style="width:143px">Fach</div><div class="c ro" style="width:299px">Fachbezogene Mathematik</div><div class="c ed" style="width:66px">Pflichtunt</div><div class="c ed" style="width:77px"></div><div class="c ed n" style="width:45px">1</div><div class="c ed n" style="width:45px">1</div><div class="c ed n" style="width:45px">1</div><div class="c ed n" style="width:45px">1</div><div class="c ed n" style="width:45px">1</div><div class="c ed" style="width:105px"><span style="letter-spacing:-0.12px">Fachbezogene Mat...</span></div><div class="c ed" style="width:72px;padding-left:1px">1-6</div><div class="c ed" style="width:72px;padding-left:1px">1-6</div><div class="c ed" style="width:57px;padding-left:1px">Wort</div><div class="c" style="width:20px;background:#fff"></div></div>
<div class="delb" style="left:1156px;top:322px"><svg width="17" height="15" viewBox="0 0 17 15" style="position:absolute;left:0;top:0"><path d="M3.900 2.700l9.200 9M13.100 2.700L3.900 11.700" stroke="#FA4848" stroke-width="3.100" stroke-linecap="round"/><path d="M4.400 3.200l8.200 8M12.600 3.200L4.400 11.200" stroke="#FF8888" stroke-width="1.100" stroke-linecap="round"/></svg></div>
<div class="row e" style="top:340px"><div class="c ro n" style="width:40px">18</div><div class="c ro" style="width:143px">Fach</div><div class="c ro" style="width:299px">Grundl. Gesundheitsw., pharm. Berufs- u.Ges.-kunde</div><div class="c ed" style="width:66px">Pflichtunt</div><div class="c ed" style="width:77px"></div><div class="c ed n" style="width:45px">1</div><div class="c ed n" style="width:45px">1</div><div class="c ed n" style="width:45px">1</div><div class="c ed n" style="width:45px">1</div><div class="c ed n" style="width:45px">1</div><div class="c ed" style="width:105px"><span style="letter-spacing:-0.21px">Grundlagen des Ge...</span></div><div class="c ed" style="width:72px;padding-left:1px">1-6</div><div class="c ed" style="width:72px;padding-left:1px">1-6</div><div class="c ed" style="width:57px;padding-left:1px">Wort</div><div class="c" style="width:20px;background:#fff"></div></div>
<div class="delb" style="left:1156px;top:340px"><svg width="17" height="15" viewBox="0 0 17 15" style="position:absolute;left:0;top:0"><path d="M3.900 2.700l9.200 9M13.100 2.700L3.900 11.700" stroke="#FA4848" stroke-width="3.100" stroke-linecap="round"/><path d="M4.400 3.200l8.200 8M12.600 3.200L4.400 11.200" stroke="#FF8888" stroke-width="1.100" stroke-linecap="round"/></svg></div>
<div class="row o" style="top:358px"><div class="c ro n" style="width:40px">19</div><div class="c ro" style="width:143px">Fach</div><div class="c ro" style="width:299px">Chem.-pharm. Üb.</div><div class="c ed" style="width:66px">Pflichtunt</div><div class="c ed" style="width:77px"></div><div class="c ed n" style="width:45px">1</div><div class="c ed n" style="width:45px">1</div><div class="c ed n" style="width:45px">1</div><div class="c ed n" style="width:45px">1</div><div class="c ed n" style="width:45px">1</div><div class="c ed" style="width:105px"><span style="letter-spacing:-0.18px">Chemisch-pharmaz...</span></div><div class="c ed" style="width:72px;padding-left:1px">1-6</div><div class="c ed" style="width:72px;padding-left:1px">1-6</div><div class="c ed" style="width:57px;padding-left:1px">Wort</div><div class="c" style="width:20px;background:#fff"></div></div>
<div class="delb" style="left:1156px;top:358px"><svg width="17" height="15" viewBox="0 0 17 15" style="position:absolute;left:0;top:0"><path d="M3.900 2.700l9.200 9M13.100 2.700L3.900 11.700" stroke="#FA4848" stroke-width="3.100" stroke-linecap="round"/><path d="M4.400 3.200l8.200 8M12.600 3.200L4.400 11.200" stroke="#FF8888" stroke-width="1.100" stroke-linecap="round"/></svg></div>
<div class="row e" style="top:376px"><div class="c ro n" style="width:40px">20</div><div class="c ro" style="width:143px">Fach</div><div class="c ro" style="width:299px">Galenische Übungen</div><div class="c ed" style="width:66px">Pflichtunt</div><div class="c ed" style="width:77px"></div><div class="c ed n" style="width:45px">1</div><div class="c ed n" style="width:45px">1</div><div class="c ed n" style="width:45px">1</div><div class="c ed n" style="width:45px">1</div><div class="c ed n" style="width:45px">1</div><div class="c ed" style="width:105px"><span style="letter-spacing:-0.10px">Galenische Übungen</span></div><div class="c ed" style="width:72px;padding-left:1px">1-6</div><div class="c ed" style="width:72px;padding-left:1px">1-6</div><div class="c ed" style="width:57px;padding-left:1px">Wort</div><div class="c" style="width:20px;background:#fff"></div></div>
<div class="delb" style="left:1156px;top:376px"><svg width="17" height="15" viewBox="0 0 17 15" style="position:absolute;left:0;top:0"><path d="M3.900 2.700l9.200 9M13.100 2.700L3.900 11.700" stroke="#FA4848" stroke-width="3.100" stroke-linecap="round"/><path d="M4.400 3.200l8.200 8M12.600 3.200L4.400 11.200" stroke="#FF8888" stroke-width="1.100" stroke-linecap="round"/></svg></div>
<div class="row o" style="top:394px"><div class="c ro n" style="width:40px">21</div><div class="c ro" style="width:143px">Fach</div><div class="c ro" style="width:299px">Übungen Drogenkunde</div><div class="c ed" style="width:66px">Pflichtunt</div><div class="c ed" style="width:77px"></div><div class="c ed n" style="width:45px">1</div><div class="c ed n" style="width:45px">1</div><div class="c ed n" style="width:45px">1</div><div class="c ed n" style="width:45px">1</div><div class="c ed n" style="width:45px">1</div><div class="c ed" style="width:105px"><span style="letter-spacing:-0.21px">Übungen zur Droge...</span></div><div class="c ed" style="width:72px;padding-left:1px">1-6</div><div class="c ed" style="width:72px;padding-left:1px">1-6</div><div class="c ed" style="width:57px;padding-left:1px">Wort</div><div class="c" style="width:20px;background:#fff"></div></div>
<div class="delb" style="left:1156px;top:394px"><svg width="17" height="15" viewBox="0 0 17 15" style="position:absolute;left:0;top:0"><path d="M3.900 2.700l9.200 9M13.100 2.700L3.900 11.700" stroke="#FA4848" stroke-width="3.100" stroke-linecap="round"/><path d="M4.400 3.200l8.200 8M12.600 3.200L4.400 11.200" stroke="#FF8888" stroke-width="1.100" stroke-linecap="round"/></svg></div>
<div class="row e" style="top:412px"><div class="c ro n" style="width:40px">22</div><div class="c ro" style="width:143px">Fach</div><div class="c ro" style="width:299px">Üb. Abgabe u. Ber. sowie dig. Techn.</div><div class="c ed" style="width:66px">Pflichtunt</div><div class="c ed" style="width:77px"></div><div class="c ed n" style="width:45px">1</div><div class="c ed n" style="width:45px">1</div><div class="c ed n" style="width:45px">1</div><div class="c ed n" style="width:45px">1</div><div class="c ed n" style="width:45px">1</div><div class="c ed" style="width:105px">Übungen zur Abga...</div><div class="c ed" style="width:72px;padding-left:1px">1-6</div><div class="c ed" style="width:72px;padding-left:1px">1-6</div><div class="c ed" style="width:57px;padding-left:1px">Wort</div><div class="c" style="width:20px;background:#fff"></div></div>
<div class="delb" style="left:1156px;top:412px"><svg width="17" height="15" viewBox="0 0 17 15" style="position:absolute;left:0;top:0"><path d="M3.900 2.700l9.200 9M13.100 2.700L3.900 11.700" stroke="#FA4848" stroke-width="3.100" stroke-linecap="round"/><path d="M4.400 3.200l8.200 8M12.600 3.200L4.400 11.200" stroke="#FF8888" stroke-width="1.100" stroke-linecap="round"/></svg></div>
<div class="row o" style="top:430px"><div class="c ro n" style="width:40px">23</div><div class="c ro" style="width:143px">Fach</div><div class="c ro" style="width:299px">Apothekenpraxis, einschl. QM u. Nutzung dig.Techn.</div><div class="c ed" style="width:66px">Pflichtunt</div><div class="c ed" style="width:77px"></div><div class="c ed n" style="width:45px">1</div><div class="c ed n" style="width:45px">1</div><div class="c ed n" style="width:45px">1</div><div class="c ed n" style="width:45px">1</div><div class="c ed n" style="width:45px">1</div><div class="c ed" style="width:105px"><span style="letter-spacing:-0.11px">Apothekenpraxis, e...</span></div><div class="c ed" style="width:72px;padding-left:1px">1-6</div><div class="c ed" style="width:72px;padding-left:1px">1-6</div><div class="c ed" style="width:57px;padding-left:1px">Wort</div><div class="c" style="width:20px;background:#fff"></div></div>
<div class="delb" style="left:1156px;top:430px"><svg width="17" height="15" viewBox="0 0 17 15" style="position:absolute;left:0;top:0"><path d="M3.900 2.700l9.200 9M13.100 2.700L3.900 11.700" stroke="#FA4848" stroke-width="3.100" stroke-linecap="round"/><path d="M4.400 3.200l8.200 8M12.600 3.200L4.400 11.200" stroke="#FF8888" stroke-width="1.100" stroke-linecap="round"/></svg></div>
<div class="row e" style="top:448px"><div class="c ro n" style="width:40px">24</div><div class="c ro" style="width:143px">Fach</div><div class="c ro" style="width:299px">Deutsch II</div><div class="c ed" style="width:66px">Wahlunt</div><div class="c ed" style="width:77px"></div><div class="c ed n" style="width:45px">1</div><div class="c ed n" style="width:45px">1</div><div class="c ed n" style="width:45px">1</div><div class="c ed n" style="width:45px">1</div><div class="c ed n" style="width:45px">1</div><div class="c ed" style="width:105px">Deutsch II</div><div class="c ed" style="width:72px;padding-left:1px">1-6</div><div class="c ed" style="width:72px;padding-left:1px">1-6</div><div class="c ed" style="width:57px;padding-left:1px">Wort</div><div class="c" style="width:20px;background:#fff"></div></div>
<div class="delb" style="left:1156px;top:448px"><svg width="17" height="15" viewBox="0 0 17 15" style="position:absolute;left:0;top:0"><path d="M3.900 2.700l9.200 9M13.100 2.700L3.900 11.700" stroke="#FA4848" stroke-width="3.100" stroke-linecap="round"/><path d="M4.400 3.200l8.200 8M12.600 3.200L4.400 11.200" stroke="#FF8888" stroke-width="1.100" stroke-linecap="round"/></svg></div>
<div class="row o" style="top:466px"><div class="c ro n" style="width:40px">25</div><div class="c ro" style="width:143px">Fach</div><div class="c ro" style="width:299px">Englisch II</div><div class="c ed" style="width:66px">Wahlunt</div><div class="c ed" style="width:77px"></div><div class="c ed n" style="width:45px">1</div><div class="c ed n" style="width:45px">1</div><div class="c ed n" style="width:45px">1</div><div class="c ed n" style="width:45px">1</div><div class="c ed n" style="width:45px">1</div><div class="c ed" style="width:105px">Englisch II</div><div class="c ed" style="width:72px;padding-left:1px">1-6</div><div class="c ed" style="width:72px;padding-left:1px">1-6</div><div class="c ed" style="width:57px;padding-left:1px">Wort</div><div class="c" style="width:20px;background:#fff"></div></div>
<div class="delb" style="left:1156px;top:466px"><svg width="17" height="15" viewBox="0 0 17 15" style="position:absolute;left:0;top:0"><path d="M3.900 2.700l9.200 9M13.100 2.700L3.900 11.700" stroke="#FA4848" stroke-width="3.100" stroke-linecap="round"/><path d="M4.400 3.200l8.200 8M12.600 3.200L4.400 11.200" stroke="#FF8888" stroke-width="1.100" stroke-linecap="round"/></svg></div>
<div class="row e" style="top:484px"><div class="c ro n" style="width:40px">26</div><div class="c ro" style="width:143px">Fach</div><div class="c ro" style="width:299px">Mathematik II</div><div class="c ed" style="width:66px">Wahlunt</div><div class="c ed" style="width:77px"></div><div class="c ed n" style="width:45px">1</div><div class="c ed n" style="width:45px">1</div><div class="c ed n" style="width:45px">1</div><div class="c ed n" style="width:45px">1</div><div class="c ed n" style="width:45px">1</div><div class="c ed" style="width:105px">Mathematik II</div><div class="c ed" style="width:72px;padding-left:1px">1-6</div><div class="c ed" style="width:72px;padding-left:1px">1-6</div><div class="c ed" style="width:57px;padding-left:1px">Wort</div><div class="c" style="width:20px;background:#fff"></div></div>
<div class="delb" style="left:1156px;top:484px"><svg width="17" height="15" viewBox="0 0 17 15" style="position:absolute;left:0;top:0"><path d="M3.900 2.700l9.200 9M13.100 2.700L3.900 11.700" stroke="#FA4848" stroke-width="3.100" stroke-linecap="round"/><path d="M4.400 3.200l8.200 8M12.600 3.200L4.400 11.200" stroke="#FF8888" stroke-width="1.100" stroke-linecap="round"/></svg></div>
<div class="row o" style="top:502px"><div class="c ro n" style="width:40px">27</div><div class="c ed" style="width:143px">erfolgreich</div><div class="c ed" style="width:299px">erfolgreich</div><div class="c ro" style="width:66px"></div><div class="c ro" style="width:77px"></div><div class="c ro" style="width:45px"></div><div class="c ro" style="width:45px"></div><div class="c ro" style="width:45px"></div><div class="c ro" style="width:45px"></div><div class="c ro" style="width:45px"></div><div class="c ed" style="width:105px">erfolgreich</div><div class="c ro" style="width:72px"></div><div class="c ro" style="width:72px"></div><div class="c ro" style="width:57px"></div><div class="c" style="width:20px;background:#fff"></div></div>
<div class="delb" style="left:1156px;top:502px"><svg width="17" height="15" viewBox="0 0 17 15" style="position:absolute;left:0;top:0"><path d="M3.900 2.700l9.200 9M13.100 2.700L3.900 11.700" stroke="#FA4848" stroke-width="3.100" stroke-linecap="round"/><path d="M4.400 3.200l8.200 8M12.600 3.200L4.400 11.200" stroke="#FF8888" stroke-width="1.100" stroke-linecap="round"/></svg></div>
<div class="row e" style="top:520px"><div class="c ro n" style="width:40px">28</div><div class="c ed" style="width:143px">Bemerkungen</div><div class="c ed" style="width:299px">Bemerkungen</div><div class="c ro" style="width:66px"></div><div class="c ro" style="width:77px"></div><div class="c ro" style="width:45px"></div><div class="c ro" style="width:45px"></div><div class="c ro" style="width:45px"></div><div class="c ro" style="width:45px"></div><div class="c ro" style="width:45px"></div><div class="c ed" style="width:105px">Bemerkungen</div><div class="c ro" style="width:72px"></div><div class="c ro" style="width:72px"></div><div class="c ro" style="width:57px"></div><div class="c" style="width:20px;background:#fff"></div></div>
<div class="delb" style="left:1156px;top:520px"><svg width="17" height="15" viewBox="0 0 17 15" style="position:absolute;left:0;top:0"><path d="M3.900 2.700l9.200 9M13.100 2.700L3.900 11.700" stroke="#FA4848" stroke-width="3.100" stroke-linecap="round"/><path d="M4.400 3.200l8.200 8M12.600 3.200L4.400 11.200" stroke="#FF8888" stroke-width="1.100" stroke-linecap="round"/></svg></div>
<div class="row o" style="top:538px"><div class="c ro n" style="width:40px">29</div><div class="c ed" style="width:143px">versetztText</div><div class="c ed" style="width:299px">versetztText</div><div class="c ro" style="width:66px"></div><div class="c ro" style="width:77px"></div><div class="c ro" style="width:45px"></div><div class="c ro" style="width:45px"></div><div class="c ro" style="width:45px"></div><div class="c ro" style="width:45px"></div><div class="c ro" style="width:45px"></div><div class="c ed" style="width:105px">versetztText</div><div class="c ro" style="width:72px"></div><div class="c ro" style="width:72px"></div><div class="c ro" style="width:57px"></div><div class="c" style="width:20px;background:#fff"></div></div>
<div class="delb" style="left:1156px;top:538px"><svg width="17" height="15" viewBox="0 0 17 15" style="position:absolute;left:0;top:0"><path d="M3.900 2.700l9.200 9M13.100 2.700L3.900 11.700" stroke="#FA4848" stroke-width="3.100" stroke-linecap="round"/><path d="M4.400 3.200l8.200 8M12.600 3.200L4.400 11.200" stroke="#FF8888" stroke-width="1.100" stroke-linecap="round"/></svg></div>
<div class="row e" style="top:556px"><div class="c ro n" style="width:40px">30</div><div class="c ed" style="width:143px">Durchschnitt 1</div><div class="c ed" style="width:299px">Lob / Preis</div><div class="c ro" style="width:66px"></div><div class="c ro" style="width:77px"></div><div class="c ro" style="width:45px"></div><div class="c ro" style="width:45px"></div><div class="c ro" style="width:45px"></div><div class="c ro" style="width:45px"></div><div class="c ro" style="width:45px"></div><div class="c ed" style="width:105px">Durchschnitt 1</div><div class="c ro" style="width:72px"></div><div class="c ro" style="width:72px"></div><div class="c ro" style="width:57px"></div><div class="c" style="width:20px;background:#fff"></div></div>
<div class="delb" style="left:1156px;top:556px"><svg width="17" height="15" viewBox="0 0 17 15" style="position:absolute;left:0;top:0"><path d="M3.900 2.700l9.200 9M13.100 2.700L3.900 11.700" stroke="#FA4848" stroke-width="3.100" stroke-linecap="round"/><path d="M4.400 3.200l8.200 8M12.600 3.200L4.400 11.200" stroke="#FF8888" stroke-width="1.100" stroke-linecap="round"/></svg></div>
<div class="row o" style="top:574px"><div class="c ro n" style="width:40px">31</div><div class="c ed" style="width:143px">Lob / Preis</div><div class="c ed" style="width:299px">Lob / Preis</div><div class="c ro" style="width:66px"></div><div class="c ro" style="width:77px"></div><div class="c ro" style="width:45px"></div><div class="c ro" style="width:45px"></div><div class="c ro" style="width:45px"></div><div class="c ro" style="width:45px"></div><div class="c ro" style="width:45px"></div><div class="c ed" style="width:105px">Lob / Preis</div><div class="c ro" style="width:72px"></div><div class="c ro" style="width:72px"></div><div class="c ro" style="width:57px"></div><div class="c" style="width:20px;background:#fff"></div></div>
<div class="delb" style="left:1156px;top:574px"><svg width="17" height="15" viewBox="0 0 17 15" style="position:absolute;left:0;top:0"><path d="M3.900 2.700l9.200 9M13.100 2.700L3.900 11.700" stroke="#FA4848" stroke-width="3.100" stroke-linecap="round"/><path d="M4.400 3.200l8.200 8M12.600 3.200L4.400 11.200" stroke="#FF8888" stroke-width="1.100" stroke-linecap="round"/></svg></div>
<div class="row e" style="top:592px"><div class="c ro" style="width:40px"></div><div class="c ro" style="width:143px"></div><div class="c ro" style="width:299px"></div><div class="c ro" style="width:66px"></div><div class="c ro" style="width:77px"></div><div class="c ro" style="width:45px"></div><div class="c ro" style="width:45px"></div><div class="c ro" style="width:45px"></div><div class="c ro" style="width:45px"></div><div class="c ro" style="width:45px"></div><div class="c ro" style="width:105px"></div><div class="c ro" style="width:72px"></div><div class="c ro" style="width:72px"></div><div class="c ro" style="width:57px"></div><div class="c" style="width:20px;background:#fff"></div></div>
<div class="delg" style="left:1156px;top:592px"><svg width="17" height="15" viewBox="0 0 17 15" style="position:absolute;left:0;top:0"><path d="M3.900 2.700l9.200 9M13.100 2.700L3.900 11.700" stroke="#909090" stroke-width="3.100" stroke-linecap="round"/></svg></div>
</div>
<div class="abs" style="left:1193px;top:391px;width:17px;height:34px;border:1px solid #1C4080;border-radius:3px;background:linear-gradient(#FFFFFF,#F6F6FC 45%,#D2D4E2);box-shadow:inset 0 0 0 1px #FFD878, inset 0 0 0 2px #FBC450"><svg width="11" height="11" viewBox="0 0 11 11" style="position:absolute;left:3px;top:10px"><path d="M0 .5h9M0 2.500h9M.5 0v8.500M4.500 0v4.500M8.500 0v4.500M0 8.500h2.800" fill="none" stroke="#111" stroke-width="1"/><path d="M3 5.800h7.200l-3.600 4.300z" fill="#000"/></svg></div>
<div class="abs" style="left:1231px;top:27px;width:1px;height:980px;background:#6A6A6C"></div>
<div class="abs" style="left:1232px;top:28px;width:1px;height:979px;background:#FAFAFF"></div>
<div class="abs" style="left:1232px;top:28px;width:185px;height:1px;background:#FAFAFF"></div>
<div class="grp" style="left:1238px;top:36px;width:179px"></div><div class="leg" style="left:1247px;top:29px">Navigator</div>
<div class="tbl nt" style="left:1238px;top:46px;width:185px;height:79px;background:#fff"><div class="hdr" style="height:21px;padding-top:1px"><div class="hc" style="left:0;width:58px;top:1px">Schul-...</div><div class="arr" style="left:44px;top:8px"></div><div class="hc" style="left:52px;width:8px;top:1px">1</div><div class="hd" style="left:58px;top:4px;bottom:3px"></div><div class="hc" style="left:60px;width:58px;top:1px">Zweig</div><div class="arr" style="left:103px;top:8px"></div><div class="hc" style="left:111px;width:8px;top:1px">2</div><div class="hd" style="left:118px;top:4px;bottom:3px"></div><div class="hc" style="left:120px;width:58px;top:1px">Schule</div><div class="hd" style="left:177px;top:4px;bottom:3px"></div></div><div class="abs" style="left:0;top:21px;width:185px;height:19px;background:#3F7EFF"></div><div class="abs" style="left:0;top:40px;width:185px;height:18px;background:#CCD9F5"></div><div class="abs" style="left:0;top:58px;width:185px;height:17px;background:#E8E8F2"></div><div class="abs" style="left:0;top:75px;width:185px;height:2px;background:#CCD9F5"></div></div>
<div class="tbl nt" style="left:1238px;top:132px;width:185px;height:174px;background:#fff"><div class="hdr" style="height:21px;z-index:2"><div class="hc" style="left:1px;width:170px;top:1px">Zeugnisart (Anzeigeform)</div><div class="hd" style="left:177px;top:4px;bottom:3px"></div></div><div class="abs" style="left:1px;top:9px;width:185px;height:17px;background:#E8E8F2;color:#000;line-height:17px;padding-left:0;white-space:nowrap">Prüfung 1</div><div class="abs" style="left:1px;top:27px;width:185px;height:17px;background:#DADFF4;color:#000;line-height:17px;padding-left:0;white-space:nowrap">Prüfung 2</div><div class="abs" style="left:1px;top:45px;width:185px;height:17px;background:#E8E8F2;color:#000;line-height:17px;padding-left:0;white-space:nowrap">KMK FS-Zertifikat1</div><div class="abs" style="left:1px;top:63px;width:185px;height:17px;background:#DADFF4;color:#000;line-height:17px;padding-left:0;white-space:nowrap">KMK FS-Zertifikat2</div><div class="abs" style="left:1px;top:81px;width:185px;height:17px;background:#E8E8F2;color:#000;line-height:17px;padding-left:0;white-space:nowrap">KMK FS-Zertifikat3</div><div class="abs" style="left:1px;top:99px;width:185px;height:17px;background:#DADFF4;color:#000;line-height:17px;padding-left:0;white-space:nowrap">BSAbschluss-Zusatzprüfung</div><div class="abs" style="left:1px;top:117px;width:185px;height:17px;background:#E8E8F2;color:#000;line-height:17px;padding-left:0;white-space:nowrap">Beiblatt J</div><div class="abs" style="left:1px;top:135px;width:185px;height:17px;background:#DADFF4;color:#000;line-height:17px;padding-left:0;white-space:nowrap">Beiblatt HZ</div><div class="abs" style="left:1px;top:153px;width:185px;height:17px;background:#3F7EFF;color:#fff;line-height:17px;padding-left:0;white-space:nowrap">Abschlz. Schul. Ausbildg.</div></div>
<div class="abs" style="left:1238px;top:311px;width:179px;height:1px;background:#FCFCFF"></div>
<div class="abs" style="left:1238px;top:317px;width:179px;height:1px;background:#707074"></div>
<div class="abs" style="left:1238px;top:318px;width:179px;height:1px;background:#FAFAFF"></div>
<div class="btn" style="left:1238px;top:321px;width:90px;height:23px;line-height:21px">Filter</div>
<div class="chk" style="left:1335px;top:326px"></div>
<div class="lbl" style="left:1354px;top:326px">BG</div>
<div class="btn" style="left:1238px;top:354px;width:90px;height:23px;line-height:21px">Suche</div>
<div class="chk" style="left:1335px;top:359px;border-color:#C8CCD8;background:#F8F8FC"></div>
<div class="tbl nt" style="left:1238px;top:386px;width:185px;height:625px;background:#E8E8F2"><div class="hdr" style="height:20px;z-index:2"><div class="hc" style="left:-1px;width:120px;top:2px">Bezeichnung</div><div class="arr" style="left:167px;top:8px"></div><div class="hd" style="left:177px;top:4px;bottom:3px"></div></div><div class="abs" style="left:1px;top:21px;width:185px;height:17px;background:#E8E8F2;color:#fff;line-height:16px;padding-left:0"></div><div class="abs" style="left:1px;top:39px;width:185px;height:17px;background:#CCD9F5;color:#fff;line-height:16px;padding-left:0"></div><div class="abs" style="left:1px;top:57px;width:185px;height:17px;background:#E8E8F2;color:#fff;line-height:16px;padding-left:0"></div><div class="abs" style="left:1px;top:75px;width:185px;height:17px;background:#CCD9F5;color:#fff;line-height:16px;padding-left:0"></div><div class="abs" style="left:1px;top:93px;width:185px;height:17px;background:#E8E8F2;color:#fff;line-height:16px;padding-left:0"></div><div class="abs" style="left:1px;top:111px;width:185px;height:17px;background:#CCD9F5;color:#fff;line-height:16px;padding-left:0"></div><div class="abs" style="left:1px;top:129px;width:185px;height:17px;background:#3F7EFF;color:#fff;line-height:16px;padding-left:0">2BKPH</div><div class="abs" style="left:1px;top:147px;width:185px;height:17px;background:#CCD9F5;color:#fff;line-height:16px;padding-left:0"></div><div class="abs" style="left:1px;top:165px;width:185px;height:17px;background:#E8E8F2;color:#fff;line-height:16px;padding-left:0"></div><div class="abs" style="left:1px;top:183px;width:185px;height:17px;background:#CCD9F5;color:#fff;line-height:16px;padding-left:0"></div><div class="abs" style="left:1px;top:201px;width:185px;height:17px;background:#E8E8F2;color:#fff;line-height:16px;padding-left:0"></div></div>
<svg class="abs" style="left:0;top:0" width="1417" height="620" viewBox="0 0 1417 620" shape-rendering="crispEdges"><rect x="1236" y="68" width="181" height="18" fill="#4080FF"/><rect x="1236" y="86" width="181" height="5" fill="#C4D2F6"/><rect x="1236" y="91" width="181" height="10" fill="#CCD9F5"/><rect x="1236" y="101" width="181" height="5" fill="#DCE0F3"/><rect x="1236" y="106" width="181" height="15" fill="#E8E8F2"/><rect x="1236" y="121" width="181" height="2" fill="#DDE2F3"/><rect x="1236" y="68" width="5" height="18" fill="#8CA4E0"/><rect x="1236" y="86" width="5" height="15" fill="#BCC4DC"/><rect x="1236" y="101" width="5" height="20" fill="#C8C8D4"/><rect x="1241" y="71" width="5" height="5" fill="#5E95FD"/><rect x="1246" y="71" width="5" height="5" fill="#6596FF"/><rect x="1251" y="71" width="5" height="5" fill="#578EFD"/><rect x="1256" y="71" width="5" height="5" fill="#6494FD"/><rect x="1261" y="71" width="5" height="5" fill="#6B9AFF"/><rect x="1266" y="71" width="5" height="5" fill="#6EA2FD"/><rect x="1271" y="71" width="5" height="5" fill="#5990FF"/><rect x="1276" y="71" width="5" height="5" fill="#5C92FF"/><rect x="1281" y="71" width="5" height="5" fill="#6396FD"/><rect x="1286" y="71" width="5" height="5" fill="#6999FF"/><rect x="1241" y="76" width="5" height="5" fill="#669AFF"/><rect x="1246" y="76" width="5" height="5" fill="#6195FF"/><rect x="1251" y="76" width="5" height="5" fill="#6EA1FC"/><rect x="1256" y="76" width="5" height="5" fill="#6896FF"/><rect x="1261" y="76" width="5" height="5" fill="#5B92FF"/><rect x="1266" y="76" width="5" height="5" fill="#72A2FF"/><rect x="1271" y="76" width="5" height="5" fill="#6B9DFF"/><rect x="1276" y="76" width="5" height="5" fill="#6997FF"/><rect x="1281" y="76" width="5" height="5" fill="#719EFD"/><rect x="1286" y="76" width="5" height="5" fill="#6695FF"/><rect x="1301" y="71" width="5" height="5" fill="#5C92FF"/><rect x="1306" y="71" width="5" height="5" fill="#5C92FF"/><rect x="1311" y="71" width="5" height="5" fill="#5B92FF"/><rect x="1301" y="76" width="5" height="5" fill="#6B98FF"/><rect x="1306" y="76" width="5" height="5" fill="#5F94FD"/><rect x="1311" y="76" width="5" height="5" fill="#578FFF"/><rect x="1361" y="71" width="5" height="5" fill="#6194FF"/><rect x="1366" y="71" width="5" height="5" fill="#5E94FF"/><rect x="1371" y="71" width="5" height="5" fill="#6296FC"/><rect x="1376" y="71" width="5" height="5" fill="#6C9DFF"/><rect x="1381" y="71" width="5" height="5" fill="#5D91FF"/><rect x="1386" y="71" width="5" height="5" fill="#548DFE"/><rect x="1391" y="71" width="5" height="5" fill="#5A90FD"/><rect x="1396" y="71" width="5" height="5" fill="#568DFF"/><rect x="1401" y="71" width="5" height="5" fill="#6195FE"/><rect x="1406" y="71" width="5" height="5" fill="#5B94FF"/><rect x="1361" y="76" width="5" height="5" fill="#6395FD"/><rect x="1366" y="76" width="5" height="5" fill="#5F96FD"/><rect x="1371" y="76" width="5" height="5" fill="#598FFE"/><rect x="1376" y="76" width="5" height="5" fill="#6398FF"/><rect x="1381" y="76" width="5" height="5" fill="#709CFE"/><rect x="1386" y="76" width="5" height="5" fill="#5D91FF"/><rect x="1391" y="76" width="5" height="5" fill="#5E95FF"/><rect x="1396" y="76" width="5" height="5" fill="#719FFF"/><rect x="1401" y="76" width="5" height="5" fill="#5D92FD"/><rect x="1406" y="76" width="5" height="5" fill="#578EFF"/><rect x="1241" y="81" width="70" height="5" fill="#5C90FC"/><rect x="1356" y="81" width="61" height="5" fill="#5C90FC"/><rect x="1241" y="86" width="5" height="5" fill="#B4C0DD"/><rect x="1246" y="86" width="5" height="5" fill="#B3BED9"/><rect x="1251" y="86" width="5" height="5" fill="#BDCAE7"/><rect x="1256" y="86" width="5" height="5" fill="#B5C1DD"/><rect x="1261" y="86" width="5" height="5" fill="#C0CCE8"/><rect x="1266" y="86" width="5" height="5" fill="#B7C1DF"/><rect x="1271" y="86" width="5" height="5" fill="#BDC9E3"/><rect x="1276" y="86" width="5" height="5" fill="#BDC7E2"/><rect x="1281" y="86" width="5" height="5" fill="#BECCE8"/><rect x="1286" y="86" width="5" height="5" fill="#C0CBE7"/><rect x="1241" y="91" width="5" height="5" fill="#9196AE"/><rect x="1246" y="91" width="5" height="5" fill="#737698"/><rect x="1251" y="91" width="5" height="5" fill="#9096AB"/><rect x="1256" y="91" width="5" height="5" fill="#939CBA"/><rect x="1261" y="91" width="5" height="5" fill="#949BBD"/><rect x="1266" y="91" width="5" height="5" fill="#9099B8"/><rect x="1271" y="91" width="5" height="5" fill="#9195B0"/><rect x="1276" y="91" width="5" height="5" fill="#828EA6"/><rect x="1281" y="91" width="5" height="5" fill="#A4AAC7"/><rect x="1286" y="91" width="5" height="5" fill="#7E829F"/><rect x="1241" y="96" width="5" height="5" fill="#ADB4D1"/><rect x="1246" y="96" width="5" height="5" fill="#B2BED9"/><rect x="1251" y="96" width="5" height="5" fill="#ACB7D1"/><rect x="1256" y="96" width="5" height="5" fill="#AAB4D1"/><rect x="1261" y="96" width="5" height="5" fill="#AEB8D6"/><rect x="1266" y="96" width="5" height="5" fill="#AAB4CC"/><rect x="1271" y="96" width="5" height="5" fill="#ADB7CF"/><rect x="1276" y="96" width="5" height="5" fill="#B5C0DB"/><rect x="1281" y="96" width="5" height="5" fill="#B7C3DF"/><rect x="1286" y="96" width="5" height="5" fill="#B6C0DA"/><rect x="1296" y="86" width="5" height="5" fill="#CAD6F2"/><rect x="1301" y="86" width="5" height="5" fill="#C0CCE8"/><rect x="1306" y="86" width="5" height="5" fill="#C2CEEA"/><rect x="1311" y="86" width="5" height="5" fill="#C1CEE9"/><rect x="1316" y="86" width="5" height="5" fill="#BEC9E5"/><rect x="1321" y="86" width="5" height="5" fill="#BDC8E6"/><rect x="1296" y="91" width="5" height="5" fill="#C3CDE9"/><rect x="1301" y="91" width="5" height="5" fill="#A5ACC5"/><rect x="1306" y="91" width="5" height="5" fill="#959BB2"/><rect x="1311" y="91" width="5" height="5" fill="#A1A7C4"/><rect x="1316" y="91" width="5" height="5" fill="#9EABC5"/><rect x="1321" y="91" width="5" height="5" fill="#A4ACC9"/><rect x="1296" y="96" width="5" height="5" fill="#CCD8F5"/><rect x="1301" y="96" width="5" height="5" fill="#B1BDDA"/><rect x="1306" y="96" width="5" height="5" fill="#B4C1DC"/><rect x="1311" y="96" width="5" height="5" fill="#B8C4DF"/><rect x="1316" y="96" width="5" height="5" fill="#B4C1DB"/><rect x="1321" y="96" width="5" height="5" fill="#B0BBD5"/><rect x="1356" y="86" width="5" height="5" fill="#CBD8F4"/><rect x="1361" y="86" width="5" height="5" fill="#C2CEE9"/><rect x="1366" y="86" width="5" height="5" fill="#BBC7E4"/><rect x="1371" y="86" width="5" height="5" fill="#C0CCE8"/><rect x="1376" y="86" width="5" height="5" fill="#C1CCE8"/><rect x="1381" y="86" width="5" height="5" fill="#BFCBE6"/><rect x="1386" y="86" width="5" height="5" fill="#C3CFEA"/><rect x="1391" y="86" width="5" height="5" fill="#C3CFEB"/><rect x="1396" y="86" width="5" height="5" fill="#C0CDE9"/><rect x="1401" y="86" width="5" height="5" fill="#C2CEEB"/><rect x="1406" y="86" width="5" height="5" fill="#BAC5E2"/><rect x="1356" y="91" width="5" height="5" fill="#C8D4F0"/><rect x="1361" y="91" width="5" height="5" fill="#8E94B1"/><rect x="1366" y="91" width="5" height="5" fill="#A3ADC9"/><rect x="1371" y="91" width="5" height="5" fill="#A0ACC6"/><rect x="1376" y="91" width="5" height="5" fill="#8992AD"/><rect x="1381" y="91" width="5" height="5" fill="#8789A2"/><rect x="1386" y="91" width="5" height="5" fill="#717E99"/><rect x="1391" y="91" width="5" height="5" fill="#A5AEC9"/><rect x="1396" y="91" width="5" height="5" fill="#8686A4"/><rect x="1401" y="91" width="5" height="5" fill="#9097B3"/><rect x="1406" y="91" width="5" height="5" fill="#8D92AE"/><rect x="1356" y="96" width="5" height="5" fill="#CBD8F4"/><rect x="1361" y="96" width="5" height="5" fill="#BAC5E1"/><rect x="1366" y="96" width="5" height="5" fill="#AFB9D2"/><rect x="1371" y="96" width="5" height="5" fill="#ACB5D1"/><rect x="1376" y="96" width="5" height="5" fill="#ACB9D3"/><rect x="1381" y="96" width="5" height="5" fill="#B9C6E0"/><rect x="1386" y="96" width="5" height="5" fill="#AFB7D1"/><rect x="1391" y="96" width="5" height="5" fill="#B2BDD8"/><rect x="1396" y="96" width="5" height="5" fill="#ACB8D3"/><rect x="1401" y="96" width="5" height="5" fill="#ABB7CF"/><rect x="1406" y="96" width="5" height="5" fill="#B9C6E2"/><rect x="1241" y="106" width="5" height="5" fill="#C2C3D1"/><rect x="1246" y="106" width="5" height="5" fill="#C6CAD4"/><rect x="1251" y="106" width="5" height="5" fill="#BEBACA"/><rect x="1256" y="106" width="5" height="5" fill="#C1C0CD"/><rect x="1261" y="106" width="5" height="5" fill="#D0CEDC"/><rect x="1266" y="106" width="5" height="5" fill="#D0D1DC"/><rect x="1271" y="106" width="5" height="5" fill="#BFC1CF"/><rect x="1276" y="106" width="5" height="5" fill="#CFCED9"/><rect x="1281" y="106" width="5" height="5" fill="#D3D4DF"/><rect x="1286" y="106" width="5" height="5" fill="#CFD0DE"/><rect x="1241" y="111" width="5" height="5" fill="#B6B7C2"/><rect x="1246" y="111" width="5" height="5" fill="#7E818F"/><rect x="1251" y="111" width="5" height="5" fill="#9CA2B2"/><rect x="1256" y="111" width="5" height="5" fill="#9D9EAC"/><rect x="1261" y="111" width="5" height="5" fill="#B1AEC3"/><rect x="1266" y="111" width="5" height="5" fill="#A3A6B4"/><rect x="1271" y="111" width="5" height="5" fill="#A2A1B4"/><rect x="1276" y="111" width="5" height="5" fill="#9293A3"/><rect x="1281" y="111" width="5" height="5" fill="#828C9D"/><rect x="1286" y="111" width="5" height="5" fill="#878695"/><rect x="1296" y="106" width="5" height="5" fill="#E4E4EE"/><rect x="1301" y="106" width="5" height="5" fill="#D6D7E1"/><rect x="1306" y="106" width="5" height="5" fill="#CFD0DC"/><rect x="1311" y="106" width="5" height="5" fill="#D7D7E5"/><rect x="1316" y="106" width="5" height="5" fill="#D1D3E0"/><rect x="1296" y="111" width="5" height="5" fill="#E1E1EC"/><rect x="1301" y="111" width="5" height="5" fill="#A6A9B9"/><rect x="1306" y="111" width="5" height="5" fill="#A0A0AF"/><rect x="1311" y="111" width="5" height="5" fill="#A5A6B6"/><rect x="1316" y="111" width="5" height="5" fill="#B7BBC6"/><rect x="1361" y="106" width="5" height="5" fill="#C7C9D4"/><rect x="1366" y="106" width="5" height="5" fill="#CCCDDA"/><rect x="1371" y="106" width="5" height="5" fill="#BEBEC8"/><rect x="1376" y="106" width="5" height="5" fill="#D3D4DF"/><rect x="1381" y="106" width="5" height="5" fill="#C2C5D5"/><rect x="1386" y="106" width="5" height="5" fill="#C1C1CC"/><rect x="1391" y="106" width="5" height="5" fill="#D0D1DE"/><rect x="1396" y="106" width="5" height="5" fill="#BDBDCD"/><rect x="1401" y="106" width="5" height="5" fill="#C8C7D7"/><rect x="1361" y="111" width="5" height="5" fill="#AEADBA"/><rect x="1366" y="111" width="5" height="5" fill="#AFB2C3"/><rect x="1371" y="111" width="5" height="5" fill="#AEB3C3"/><rect x="1376" y="111" width="5" height="5" fill="#9FA3AF"/><rect x="1381" y="111" width="5" height="5" fill="#A6ABBA"/><rect x="1386" y="111" width="5" height="5" fill="#848497"/><rect x="1391" y="111" width="5" height="5" fill="#838090"/><rect x="1396" y="111" width="5" height="5" fill="#9D9CAC"/><rect x="1401" y="111" width="5" height="5" fill="#9691A0"/><rect x="1235" y="407" width="90" height="2" fill="#E8E8F2"/><rect x="1235" y="409" width="90" height="15" fill="#E8E8F2"/><rect x="1235" y="424" width="90" height="5" fill="#DCE2F3"/><rect x="1235" y="429" width="90" height="15" fill="#CCD9F5"/><rect x="1235" y="444" width="90" height="15" fill="#E8E8F2"/><rect x="1235" y="459" width="90" height="5" fill="#DFE4F3"/><rect x="1235" y="464" width="90" height="15" fill="#CCD9F5"/><rect x="1235" y="479" width="90" height="20" fill="#E8E8F2"/><rect x="1235" y="499" width="90" height="15" fill="#CCD9F5"/><rect x="1235" y="514" width="90" height="1" fill="#CCD9F5"/><rect x="1235" y="515" width="90" height="1" fill="#E8E8F2"/><rect x="1235" y="407" width="5" height="108" fill="#E6E6F0"/><rect x="1240" y="409" width="5" height="5" fill="#CBCCD7"/><rect x="1245" y="409" width="5" height="5" fill="#C1C0CD"/><rect x="1250" y="409" width="5" height="5" fill="#BABDC9"/><rect x="1255" y="409" width="5" height="5" fill="#CFCEDD"/><rect x="1260" y="409" width="5" height="5" fill="#C6C7D5"/><rect x="1265" y="409" width="5" height="5" fill="#C5C2D1"/><rect x="1240" y="414" width="5" height="5" fill="#AFABB9"/><rect x="1245" y="414" width="5" height="5" fill="#B4B8C8"/><rect x="1250" y="414" width="5" height="5" fill="#9393A0"/><rect x="1255" y="414" width="5" height="5" fill="#B1B0BB"/><rect x="1260" y="414" width="5" height="5" fill="#9092A4"/><rect x="1265" y="414" width="5" height="5" fill="#AAAEBE"/><rect x="1240" y="419" width="5" height="5" fill="#C9CCD7"/><rect x="1245" y="419" width="5" height="5" fill="#D5D5E1"/><rect x="1250" y="419" width="5" height="5" fill="#D9DAE6"/><rect x="1255" y="419" width="5" height="5" fill="#D7D8E2"/><rect x="1260" y="419" width="5" height="5" fill="#D4D4DF"/><rect x="1265" y="419" width="5" height="5" fill="#D9DBE5"/><rect x="1240" y="429" width="5" height="5" fill="#8B8DA6"/><rect x="1245" y="429" width="5" height="5" fill="#7F82A2"/><rect x="1250" y="429" width="5" height="5" fill="#98A0C0"/><rect x="1255" y="429" width="5" height="5" fill="#818A9A"/><rect x="1260" y="429" width="5" height="5" fill="#9DA9C6"/><rect x="1265" y="429" width="5" height="5" fill="#949FBA"/><rect x="1270" y="429" width="5" height="5" fill="#7B88A3"/><rect x="1275" y="429" width="5" height="5" fill="#868BA3"/><rect x="1240" y="434" width="5" height="5" fill="#9CA8BE"/><rect x="1245" y="434" width="5" height="5" fill="#A4ABC4"/><rect x="1250" y="434" width="5" height="5" fill="#A9B3D2"/><rect x="1255" y="434" width="5" height="5" fill="#8C8CA3"/><rect x="1260" y="434" width="5" height="5" fill="#A7B1CC"/><rect x="1265" y="434" width="5" height="5" fill="#A0ABC7"/><rect x="1270" y="434" width="5" height="5" fill="#8F95AA"/><rect x="1275" y="434" width="5" height="5" fill="#8690A9"/><rect x="1260" y="439" width="5" height="5" fill="#A5B0CB"/><rect x="1240" y="444" width="5" height="5" fill="#D5D4E0"/><rect x="1245" y="444" width="5" height="5" fill="#D0CFDB"/><rect x="1250" y="444" width="5" height="5" fill="#C7C8D2"/><rect x="1255" y="444" width="5" height="5" fill="#CECEDC"/><rect x="1260" y="444" width="5" height="5" fill="#D6D6E1"/><rect x="1265" y="444" width="5" height="5" fill="#C3C5D1"/><rect x="1270" y="444" width="5" height="5" fill="#C5C5D5"/><rect x="1275" y="444" width="5" height="5" fill="#C1C4D2"/><rect x="1280" y="444" width="5" height="5" fill="#E7E7F1"/><rect x="1285" y="444" width="5" height="5" fill="#D2D2DD"/><rect x="1290" y="444" width="5" height="5" fill="#D6D7E2"/><rect x="1295" y="444" width="5" height="5" fill="#CFD1DD"/><rect x="1300" y="444" width="5" height="5" fill="#D5D6E2"/><rect x="1240" y="449" width="5" height="5" fill="#8E92AA"/><rect x="1245" y="449" width="5" height="5" fill="#9EA0B8"/><rect x="1250" y="449" width="5" height="5" fill="#A6A6B7"/><rect x="1255" y="449" width="5" height="5" fill="#8C8698"/><rect x="1260" y="449" width="5" height="5" fill="#8A8BA8"/><rect x="1265" y="449" width="5" height="5" fill="#A2A0B6"/><rect x="1270" y="449" width="5" height="5" fill="#9A9BB1"/><rect x="1275" y="449" width="5" height="5" fill="#9791A9"/><rect x="1280" y="449" width="5" height="5" fill="#E2E2ED"/><rect x="1285" y="449" width="5" height="5" fill="#9E98AD"/><rect x="1290" y="449" width="5" height="5" fill="#8F889A"/><rect x="1295" y="449" width="5" height="5" fill="#878391"/><rect x="1300" y="449" width="5" height="5" fill="#80889A"/><rect x="1240" y="454" width="5" height="5" fill="#B6BAC6"/><rect x="1245" y="454" width="5" height="5" fill="#C6C6D1"/><rect x="1250" y="454" width="5" height="5" fill="#C9CAD7"/><rect x="1255" y="454" width="5" height="5" fill="#CCCEDB"/><rect x="1260" y="454" width="5" height="5" fill="#CFD0DA"/><rect x="1265" y="454" width="5" height="5" fill="#B5B9C8"/><rect x="1270" y="454" width="5" height="5" fill="#BDBECE"/><rect x="1275" y="454" width="5" height="5" fill="#C4C4D2"/><rect x="1280" y="454" width="5" height="5" fill="#E8E8F2"/><rect x="1285" y="454" width="5" height="5" fill="#BBBAC7"/><rect x="1290" y="454" width="5" height="5" fill="#C0C2D1"/><rect x="1295" y="454" width="5" height="5" fill="#CDCED9"/><rect x="1300" y="454" width="5" height="5" fill="#BBBFCE"/><rect x="1240" y="464" width="5" height="5" fill="#9BA8C2"/><rect x="1245" y="464" width="5" height="5" fill="#8C9AB8"/><rect x="1250" y="464" width="5" height="5" fill="#9A9EC0"/><rect x="1255" y="464" width="5" height="5" fill="#A3ABC1"/><rect x="1260" y="464" width="5" height="5" fill="#999BB7"/><rect x="1265" y="464" width="5" height="5" fill="#93A1B8"/><rect x="1270" y="464" width="5" height="5" fill="#919DBC"/><rect x="1275" y="464" width="5" height="5" fill="#A8B3CD"/><rect x="1240" y="469" width="5" height="5" fill="#9EA8C8"/><rect x="1245" y="469" width="5" height="5" fill="#8483A5"/><rect x="1250" y="469" width="5" height="5" fill="#9DA6BF"/><rect x="1255" y="469" width="5" height="5" fill="#767C9C"/><rect x="1260" y="469" width="5" height="5" fill="#A1A7C0"/><rect x="1265" y="469" width="5" height="5" fill="#76849B"/><rect x="1270" y="469" width="5" height="5" fill="#9297AF"/><rect x="1275" y="469" width="5" height="5" fill="#76869A"/><rect x="1260" y="474" width="5" height="5" fill="#ACB4D0"/><rect x="1240" y="484" width="5" height="5" fill="#A1A4B5"/><rect x="1245" y="484" width="5" height="5" fill="#9396AD"/><rect x="1250" y="484" width="5" height="5" fill="#AEB2BE"/><rect x="1255" y="484" width="5" height="5" fill="#B7B7C7"/><rect x="1260" y="484" width="5" height="5" fill="#ACADBA"/><rect x="1265" y="484" width="5" height="5" fill="#9392AD"/><rect x="1240" y="489" width="5" height="5" fill="#C7C8D7"/><rect x="1245" y="489" width="5" height="5" fill="#B8B7C5"/><rect x="1250" y="489" width="5" height="5" fill="#D0D0DC"/><rect x="1255" y="489" width="5" height="5" fill="#BDC0CE"/><rect x="1260" y="489" width="5" height="5" fill="#CAC8D7"/><rect x="1265" y="489" width="5" height="5" fill="#C3C3D4"/><rect x="1240" y="499" width="5" height="5" fill="#B6C2DB"/><rect x="1245" y="499" width="5" height="5" fill="#B1BBD7"/><rect x="1250" y="499" width="5" height="5" fill="#9DA8C3"/><rect x="1255" y="499" width="5" height="5" fill="#B6C0DC"/><rect x="1260" y="499" width="5" height="5" fill="#B7C1DC"/><rect x="1265" y="499" width="5" height="5" fill="#A1AAC3"/><rect x="1270" y="499" width="5" height="5" fill="#ADB9D7"/><rect x="1275" y="499" width="5" height="5" fill="#C7D4EF"/><rect x="1280" y="499" width="5" height="5" fill="#A6B2CC"/><rect x="1285" y="499" width="5" height="5" fill="#AFBBD3"/><rect x="1290" y="499" width="5" height="5" fill="#9AA6C0"/><rect x="1295" y="499" width="5" height="5" fill="#A4ACC5"/><rect x="1300" y="499" width="5" height="5" fill="#9CA6C6"/><rect x="1240" y="504" width="5" height="5" fill="#8990AF"/><rect x="1245" y="504" width="5" height="5" fill="#9298B5"/><rect x="1250" y="504" width="5" height="5" fill="#9299B1"/><rect x="1255" y="504" width="5" height="5" fill="#9CA2C3"/><rect x="1260" y="504" width="5" height="5" fill="#9BA5C6"/><rect x="1265" y="504" width="5" height="5" fill="#919AB4"/><rect x="1270" y="504" width="5" height="5" fill="#858DA9"/><rect x="1275" y="504" width="5" height="5" fill="#CBD8F4"/><rect x="1280" y="504" width="5" height="5" fill="#8381A4"/><rect x="1285" y="504" width="5" height="5" fill="#7F7C96"/><rect x="1290" y="504" width="5" height="5" fill="#9CABC7"/><rect x="1295" y="504" width="5" height="5" fill="#8A8FA6"/><rect x="1300" y="504" width="5" height="5" fill="#9DABC3"/><rect x="1240" y="509" width="5" height="5" fill="#B4BFDA"/><rect x="1245" y="509" width="5" height="5" fill="#B6C0DC"/><rect x="1250" y="509" width="5" height="5" fill="#A8B3CE"/><rect x="1255" y="509" width="5" height="5" fill="#BAC6E3"/><rect x="1260" y="509" width="5" height="5" fill="#B5BFDA"/><rect x="1265" y="509" width="5" height="5" fill="#A7B5CD"/><rect x="1270" y="509" width="5" height="5" fill="#BAC7E4"/><rect x="1275" y="509" width="5" height="5" fill="#CCD9F5"/><rect x="1280" y="509" width="5" height="5" fill="#B7C2E0"/><rect x="1285" y="509" width="5" height="5" fill="#B8C1DC"/><rect x="1290" y="509" width="5" height="5" fill="#ADB6D4"/><rect x="1295" y="509" width="5" height="5" fill="#BAC6E2"/><rect x="1300" y="509" width="5" height="5" fill="#AEB9D4"/><rect x="1239" y="533" width="86" height="1" fill="#E8E8F2"/><rect x="1239" y="534" width="86" height="17" fill="#CCD9F5"/><rect x="1239" y="551" width="86" height="18" fill="#E8E8F2"/><rect x="1239" y="570" width="86" height="17" fill="#CCD9F5"/><rect x="1239" y="587" width="86" height="18" fill="#E8E8F2"/><rect x="1239" y="536" width="5" height="5" fill="#9AA9BE"/><rect x="1244" y="536" width="5" height="5" fill="#AFBCD6"/><rect x="1249" y="536" width="5" height="5" fill="#ADB5D1"/><rect x="1254" y="536" width="5" height="5" fill="#A9B2CE"/><rect x="1259" y="536" width="5" height="5" fill="#ABB5D4"/><rect x="1264" y="536" width="5" height="5" fill="#A5ACC8"/><rect x="1239" y="541" width="5" height="5" fill="#7C7E9B"/><rect x="1244" y="541" width="5" height="5" fill="#717892"/><rect x="1249" y="541" width="5" height="5" fill="#82829B"/><rect x="1254" y="541" width="5" height="5" fill="#949EB6"/><rect x="1259" y="541" width="5" height="5" fill="#8E9DB7"/><rect x="1264" y="541" width="5" height="5" fill="#A0A4C0"/><rect x="1239" y="556" width="5" height="5" fill="#838395"/><rect x="1244" y="556" width="5" height="5" fill="#AEACBC"/><rect x="1249" y="556" width="5" height="5" fill="#9DA2B7"/><rect x="1254" y="556" width="5" height="5" fill="#9092A4"/><rect x="1259" y="556" width="5" height="5" fill="#B1B0C3"/><rect x="1264" y="556" width="5" height="5" fill="#82869D"/><rect x="1269" y="556" width="5" height="5" fill="#9DA2B7"/><rect x="1239" y="561" width="5" height="5" fill="#BBBCCA"/><rect x="1244" y="561" width="5" height="5" fill="#BDBDCD"/><rect x="1249" y="561" width="5" height="5" fill="#CDCEDB"/><rect x="1254" y="561" width="5" height="5" fill="#BCBECD"/><rect x="1259" y="561" width="5" height="5" fill="#BDBFD0"/><rect x="1264" y="561" width="5" height="5" fill="#CBCCD8"/><rect x="1269" y="561" width="5" height="5" fill="#C4C1D1"/><rect x="1239" y="571" width="5" height="5" fill="#B6C1DB"/><rect x="1244" y="571" width="5" height="5" fill="#B6C1DE"/><rect x="1249" y="571" width="5" height="5" fill="#ADB8D2"/><rect x="1254" y="571" width="5" height="5" fill="#B1B8D6"/><rect x="1259" y="571" width="5" height="5" fill="#B0B9D8"/><rect x="1264" y="571" width="5" height="5" fill="#AEBAD6"/><rect x="1239" y="576" width="5" height="5" fill="#A4AECB"/><rect x="1244" y="576" width="5" height="5" fill="#929BBA"/><rect x="1249" y="576" width="5" height="5" fill="#787C9D"/><rect x="1254" y="576" width="5" height="5" fill="#9098B8"/><rect x="1259" y="576" width="5" height="5" fill="#8085A1"/><rect x="1264" y="576" width="5" height="5" fill="#9EA2C0"/><rect x="1239" y="581" width="5" height="5" fill="#B2BBD5"/><rect x="1244" y="581" width="5" height="5" fill="#B3C1DB"/><rect x="1249" y="581" width="5" height="5" fill="#AEBAD5"/><rect x="1254" y="581" width="5" height="5" fill="#B6C1DF"/><rect x="1259" y="581" width="5" height="5" fill="#B8C4E0"/><rect x="1264" y="581" width="5" height="5" fill="#B7C2DD"/><rect x="1239" y="591" width="5" height="5" fill="#8E87A3"/><rect x="1244" y="591" width="5" height="5" fill="#8E89A5"/><rect x="1249" y="591" width="5" height="5" fill="#9497B2"/><rect x="1254" y="591" width="5" height="5" fill="#9597A8"/><rect x="1259" y="591" width="5" height="5" fill="#B1AFBD"/><rect x="1264" y="591" width="5" height="5" fill="#8E89A5"/><rect x="1269" y="591" width="5" height="5" fill="#DFDFEB"/><rect x="1274" y="591" width="5" height="5" fill="#9590A8"/><rect x="1279" y="591" width="5" height="5" fill="#A1A0B6"/><rect x="1284" y="591" width="5" height="5" fill="#9B9DAD"/><rect x="1289" y="591" width="5" height="5" fill="#9DA2B0"/><rect x="1239" y="596" width="5" height="5" fill="#BCBDCE"/><rect x="1244" y="596" width="5" height="5" fill="#CECDDA"/><rect x="1249" y="596" width="5" height="5" fill="#B9B7C6"/><rect x="1254" y="596" width="5" height="5" fill="#A9AEBF"/><rect x="1259" y="596" width="5" height="5" fill="#CCCDDB"/><rect x="1264" y="596" width="5" height="5" fill="#C4C2D0"/><rect x="1269" y="596" width="5" height="5" fill="#DFE0EB"/><rect x="1274" y="596" width="5" height="5" fill="#C3C2D0"/><rect x="1279" y="596" width="5" height="5" fill="#BDBBCA"/><rect x="1284" y="596" width="5" height="5" fill="#BFC1CC"/><rect x="1289" y="596" width="5" height="5" fill="#B0B2C0"/></svg>
<div class="abs" style="left:1010px;top:425px;width:200px;height:427px;background:#fff;border:1px solid #A9A9BA">
<svg class="mc" style="top:8px" viewBox="0 0 9 8"><path d="M1.100 2.900L3.400 5.900L7.700 0.700" fill="none" stroke="#000" stroke-width="2.200"/></svg>
<div class="mi" style="top:2px">Nr.</div>
<svg class="mc" style="top:28px" viewBox="0 0 9 8"><path d="M1.100 2.900L3.400 5.900L7.700 0.700" fill="none" stroke="#000" stroke-width="2.200"/></svg>
<div class="mi" style="top:22px">Kategorie</div>
<svg class="mc" style="top:48px" viewBox="0 0 9 8"><path d="M1.100 2.900L3.400 5.900L7.700 0.700" fill="none" stroke="#000" stroke-width="2.200"/></svg>
<div class="mi" style="top:42px">Kennung, Fachbezeichnung</div>
<svg class="mc" style="top:68px" viewBox="0 0 9 8"><path d="M1.100 2.900L3.400 5.900L7.700 0.700" fill="none" stroke="#000" stroke-width="2.200"/></svg>
<div class="mi" style="top:62px">Art</div>
<svg class="mc" style="top:88px" viewBox="0 0 9 8"><path d="M1.100 2.900L3.400 5.900L7.700 0.700" fill="none" stroke="#000" stroke-width="2.200"/></svg>
<div class="mi" style="top:82px">Bereich</div>
<div class="mi" style="top:102px">Unterbereich</div>
<svg class="mc" style="top:128px" viewBox="0 0 9 8"><path d="M1.100 2.900L3.400 5.900L7.700 0.700" fill="none" stroke="#000" stroke-width="2.200"/></svg>
<div class="mi" style="top:122px">Gewicht, D1</div>
<svg class="mc" style="top:148px" viewBox="0 0 9 8"><path d="M1.100 2.900L3.400 5.900L7.700 0.700" fill="none" stroke="#000" stroke-width="2.200"/></svg>
<div class="mi" style="top:142px">Gewicht, D2</div>
<svg class="mc" style="top:168px" viewBox="0 0 9 8"><path d="M1.100 2.900L3.400 5.900L7.700 0.700" fill="none" stroke="#000" stroke-width="2.200"/></svg>
<div class="mi" style="top:162px">Gewicht, D3</div>
<svg class="mc" style="top:188px" viewBox="0 0 9 8"><path d="M1.100 2.900L3.400 5.900L7.700 0.700" fill="none" stroke="#000" stroke-width="2.200"/></svg>
<div class="mi" style="top:182px">Gewicht, D4</div>
<svg class="mc" style="top:208px" viewBox="0 0 9 8"><path d="M1.100 2.900L3.400 5.900L7.700 0.700" fill="none" stroke="#000" stroke-width="2.200"/></svg>
<div class="mi" style="top:202px">Gewicht, D5</div>
<svg class="mc" style="top:228px" viewBox="0 0 9 8"><path d="M1.100 2.900L3.400 5.900L7.700 0.700" fill="none" stroke="#000" stroke-width="2.200"/></svg>
<div class="mi" style="top:222px">Bezeichnung, Zeugnis</div>
<svg class="mc" style="top:248px" viewBox="0 0 9 8"><path d="M1.100 2.900L3.400 5.900L7.700 0.700" fill="none" stroke="#000" stroke-width="2.200"/></svg>
<div class="mi" style="top:242px">Notenformat, (Erfassung)</div>
<svg class="mc" style="top:268px" viewBox="0 0 9 8"><path d="M1.100 2.900L3.400 5.900L7.700 0.700" fill="none" stroke="#000" stroke-width="2.200"/></svg>
<div class="mi" style="top:262px">Notenformat, (Zeugnisdruck)</div>
<svg class="mc" style="top:288px" viewBox="0 0 9 8"><path d="M1.100 2.900L3.400 5.900L7.700 0.700" fill="none" stroke="#000" stroke-width="2.200"/></svg>
<div class="mi" style="top:282px">Zeugnis-, ausgabe als</div>
<div class="abs" style="left:4px;right:3px;top:302px;height:1px;background:#B0B0BC"></div>
<div class="mi" style="top:305px">Horizontaler Rollbalken</div>
<div class="mi" style="top:325px">Alle Spalten anpassen</div>
<div class="mi" style="top:345px;color:#9A9A9A">Ausgewählte Spalte anpassen</div>
<div class="mi" style="top:365px">Standard wiederherstellen</div>
<div class="mi" style="top:385px">Tabelle exportieren</div>
<div class="mi" style="top:405px">Tabelleneinstellungen</div>
</div>
<div class="redbox" style="left:1226px;top:278px;width:174px;height:33px"></div>
<div class="redbox" style="left:1182px;top:378px;width:34px;height:68px"></div>
<div class="redbox" style="left:1007px;top:504px;width:70px;height:28px"></div>
<div class="redbox" style="left:550px;top:593px;width:93px;height:33px"></div>
<div class="redbox" style="left:40px;top:883px;width:242px;height:106px"></div>
<svg class="abs" style="left:1201px;top:410px" width="14" height="22" viewBox="0 0 14 22"><path d="M1.500 1.500v16l3.700-3.600 2.700 6.200 2.300-1-2.700-6h5.200z" fill="#fff" stroke="#111" stroke-width="1.100" stroke-linejoin="miter"/></svg>
</body></html>
